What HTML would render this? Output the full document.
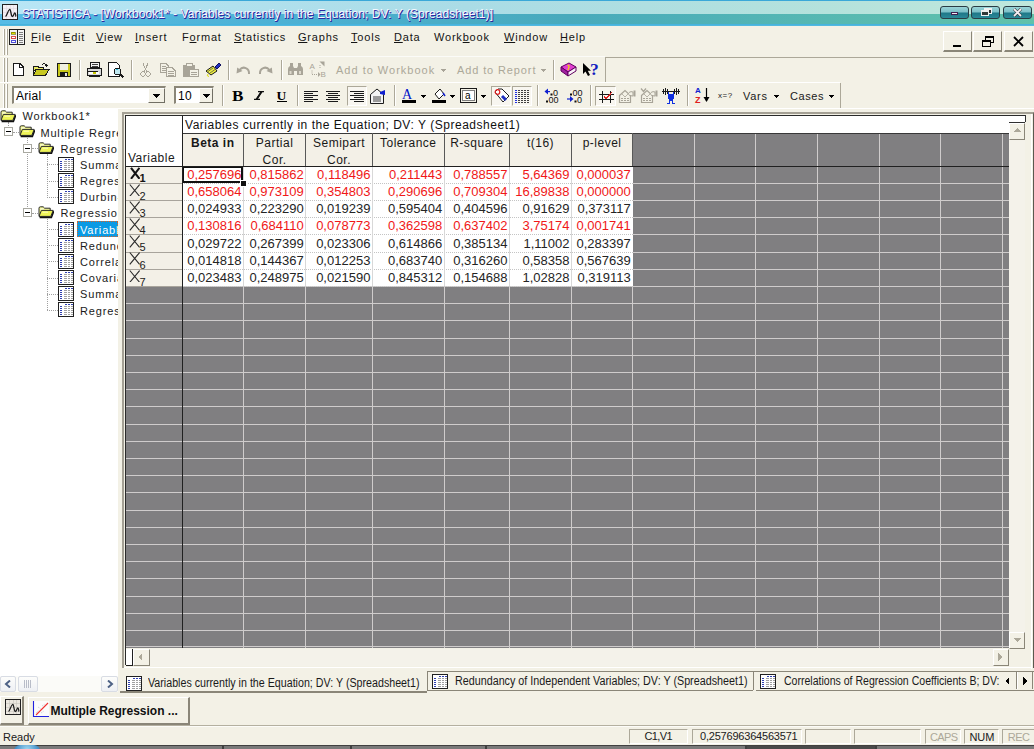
<!DOCTYPE html>
<html><head><meta charset="utf-8">
<style>
*{margin:0;padding:0;box-sizing:border-box}
html,body{width:1034px;height:749px;overflow:hidden;background:#F3F1E6;font-family:"Liberation Sans",sans-serif;font-size:11px;color:#000}
body{position:relative}
.a{position:absolute}
.t{white-space:nowrap;line-height:1}
</style></head><body>

<div class="a" style="left:0px;top:0px;width:1034px;height:26px;background:linear-gradient(to bottom,#3aa8d8 0,#3aa8d8 1px,rgba(0,0,0,0) 1px,rgba(0,0,0,0) 24px,#40b0dc 24px,#58bce0 26px),linear-gradient(to right,#b8e6f6 0,#aadce6 45%,#b4e2dc 80%,#c0e8dc 100%) 0 1px/100% 13px no-repeat,linear-gradient(to right,#56bce6 0,#4cb0d2 30%,#48aabc 55%,#56b8b2 80%,#60c2aa 100%) 0 14px/100% 10px no-repeat"></div>
<svg class="a" style="left:2px;top:4px;" width="16" height="16" viewBox="0 0 16 16"><rect x="0.5" y="0.5" width="15" height="15" fill="#f4f0f4" stroke="#202020"/><path d="M1 4.5h14M1 8.5h14M1 12.5h14M4.5 1v14M8.5 1v14M11.5 1v14" stroke="#e0d8e0" stroke-width="0.6"/><path d="M3.5 12.5C5 12 6 6 7.5 5.5C9 5 9 13 10.5 12.5C12 12 12 8.5 13 9C14 9.5 13.5 12 14 12.5" fill="none" stroke="#1a1a1a" stroke-width="1.3"/></svg>
<div class="a t" style="left:22px;top:7.6px;font-size:12px;letter-spacing:0.07px;color:#f8f8ff;text-shadow:1px 1px 0 #2a2aa0,0.5px 0.5px 0.5px #3030a0">STATISTICA - [Workbook1* - Variables currently in the Equation; DV: Y (Spreadsheet1)]</div>
<div class="a" style="left:940px;top:6px;width:29px;height:13px;border:1px solid #2a3c44;border-radius:3px;background:linear-gradient(#9ad4d8 0,#7cc0c8 45%,#1e7888 55%,#2a8898 100%)"></div>
<div class="a" style="left:951px;top:12px;width:7px;height:3px;background:#f0e8f0;border:1px solid #402050"></div>
<div class="a" style="left:971px;top:6px;width:29px;height:13px;border:1px solid #2a3c44;border-radius:3px;background:linear-gradient(#9ad4d8 0,#7cc0c8 45%,#1e7888 55%,#2a8898 100%)"></div>
<div class="a" style="left:984px;top:8px;width:8px;height:6px;border:1px solid #f0f0f0;border-top-width:2px;background:#303030"></div>
<div class="a" style="left:981px;top:10px;width:8px;height:6px;border:1px solid #f0f0f0;border-top-width:2px;background:#303838"></div>
<div class="a" style="left:1003px;top:6px;width:29px;height:13px;border:1px solid #2a3c44;border-radius:3px;background:linear-gradient(#9ad4d8 0,#7cc0c8 45%,#1e7888 55%,#2a8898 100%)"></div>
<svg class="a" style="left:1013px;top:8px;" width="9" height="9" viewBox="0 0 9 9"><path d="M1 1L8 8M8 1L1 8" stroke="#303030" stroke-width="3"/><path d="M1 1L8 8M8 1L1 8" stroke="#f4f0f4" stroke-width="1.8"/></svg>
<div class="a" style="left:3px;top:29px;width:1px;height:26px;background:#fff"></div>
<div class="a" style="left:4px;top:29px;width:1px;height:26px;background:#aca899"></div>
<div class="a" style="left:6px;top:29px;width:1px;height:26px;background:#fff"></div>
<div class="a" style="left:7px;top:29px;width:1px;height:26px;background:#aca899"></div>
<div class="a" style="left:3px;top:58px;width:1px;height:24px;background:#fff"></div>
<div class="a" style="left:4px;top:58px;width:1px;height:24px;background:#aca899"></div>
<div class="a" style="left:6px;top:58px;width:1px;height:24px;background:#fff"></div>
<div class="a" style="left:7px;top:58px;width:1px;height:24px;background:#aca899"></div>
<div class="a" style="left:3px;top:84px;width:1px;height:24px;background:#fff"></div>
<div class="a" style="left:4px;top:84px;width:1px;height:24px;background:#aca899"></div>
<div class="a" style="left:6px;top:84px;width:1px;height:24px;background:#fff"></div>
<div class="a" style="left:7px;top:84px;width:1px;height:24px;background:#aca899"></div>
<svg class="a" style="left:9px;top:29px;" width="16" height="16" viewBox="0 0 16 16" shape-rendering="crispEdges"><rect x="0.5" y="0.5" width="15" height="15" fill="#f4f4f4" stroke="#202020"/><line x1="8.5" y1="0" x2="8.5" y2="16" stroke="#202020"/><rect x="2" y="3" width="4" height="2" fill="#e0e000" stroke="#606000" stroke-width=".6"/><rect x="2" y="7" width="4" height="2" fill="#fff" stroke="#d02020" stroke-width=".8"/><rect x="2" y="11" width="4" height="2" fill="#fff" stroke="#2020d0" stroke-width=".8"/><path d="M10 3h4M10 5h4M10 7h4M10 9h4M10 11h4M10 13h4" stroke="#606060" stroke-width=".8"/></svg>
<div class="a t" style="left:31px;top:31.6px;font-size:11px;letter-spacing:0.8px;color:#141414"><u>F</u>ile</div>
<div class="a t" style="left:63px;top:31.6px;font-size:11px;letter-spacing:0.8px;color:#141414"><u>E</u>dit</div>
<div class="a t" style="left:96px;top:31.6px;font-size:11px;letter-spacing:0.8px;color:#141414"><u>V</u>iew</div>
<div class="a t" style="left:135px;top:31.6px;font-size:11px;letter-spacing:0.8px;color:#141414"><u>I</u>nsert</div>
<div class="a t" style="left:182px;top:31.6px;font-size:11px;letter-spacing:0.8px;color:#141414">F<u>o</u>rmat</div>
<div class="a t" style="left:234px;top:31.6px;font-size:11px;letter-spacing:0.8px;color:#141414"><u>S</u>tatistics</div>
<div class="a t" style="left:298px;top:31.6px;font-size:11px;letter-spacing:0.8px;color:#141414"><u>G</u>raphs</div>
<div class="a t" style="left:351px;top:31.6px;font-size:11px;letter-spacing:0.8px;color:#141414"><u>T</u>ools</div>
<div class="a t" style="left:394px;top:31.6px;font-size:11px;letter-spacing:0.8px;color:#141414"><u>D</u>ata</div>
<div class="a t" style="left:434px;top:31.6px;font-size:11px;letter-spacing:0.8px;color:#141414">Work<u>b</u>ook</div>
<div class="a t" style="left:504px;top:31.6px;font-size:11px;letter-spacing:0.8px;color:#141414"><u>W</u>indow</div>
<div class="a t" style="left:560px;top:31.6px;font-size:11px;letter-spacing:0.8px;color:#141414"><u>H</u>elp</div>
<div class="a" style="left:943px;top:31px;width:29px;height:21px;background:#F3F1E6;border-top:1px solid #fff;border-left:1px solid #fff;border-right:1px solid #8a8678;border-bottom:2px solid #8a8678"></div>
<div class="a" style="left:953px;top:45px;width:8px;height:2px;background:#000"></div>
<div class="a" style="left:973px;top:31px;width:29px;height:21px;background:#F3F1E6;border-top:1px solid #fff;border-left:1px solid #fff;border-right:1px solid #8a8678;border-bottom:2px solid #8a8678"></div>
<div class="a" style="left:985px;top:36px;width:9px;height:7px;border:1px solid #000;border-top-width:2px"></div>
<div class="a" style="left:982px;top:40px;width:9px;height:7px;border:1px solid #000;border-top-width:2px;background:#F3F1E6"></div>
<div class="a" style="left:1004px;top:31px;width:29px;height:21px;background:#F3F1E6;border-top:1px solid #fff;border-left:1px solid #fff;border-right:1px solid #8a8678;border-bottom:2px solid #8a8678"></div>
<svg class="a" style="left:1013px;top:36px;" width="11" height="11" viewBox="0 0 11 11"><path d="M1 1L10 10M10 1L1 10" stroke="#000" stroke-width="1.8"/></svg>
<div class="a" style="left:605px;top:57px;width:429px;height:1px;background:#aca899"></div>
<div class="a" style="left:0px;top:56px;width:605px;height:1px;background:#fbfbf8"></div>
<div class="a" style="left:605px;top:57px;width:1px;height:25px;background:#aca899"></div>
<div class="a" style="left:0px;top:82px;width:840px;height:1px;background:#fff"></div>
<div class="a" style="left:840px;top:83px;width:1px;height:25px;background:#aca899"></div>
<div class="a" style="left:0px;top:108px;width:1034px;height:1px;background:#fff"></div>
<svg class="a" style="left:12px;top:63px;" width="13" height="13" viewBox="0 0 13 13" shape-rendering="crispEdges"><path d="M1.5 0.5H8L11.5 4V12.5H1.5Z" fill="#fff" stroke="#1a1a1a"/><path d="M7.5 0.5V4.5H11.5" fill="none" stroke="#1a1a1a"/></svg>
<svg class="a" style="left:33px;top:62px;" width="17" height="15" viewBox="0 0 17 15" shape-rendering="crispEdges"><path d="M9 3Q11 0.5 13.5 3" fill="none" stroke="#1a1a1a"/><path d="M12 2L15 3.5L13 5Z" fill="#1a1a1a"/><path d="M0.5 4.5H5L6 5.5H10.5V8.5H0.5Z" fill="#e8e860" stroke="#1a1a1a"/><path d="M0.5 13.5L3 7.5H16L12.5 13.5Z" fill="#c8c820" stroke="#1a1a1a"/><path d="M0.5 5V13.5" stroke="#1a1a1a"/></svg>
<svg class="a" style="left:57px;top:63px;" width="14" height="14" viewBox="0 0 14 14" shape-rendering="crispEdges"><rect x="0.5" y="0.5" width="13" height="13" fill="#c8c81c" stroke="#1a1a1a"/><rect x="3" y="1" width="8" height="6" fill="#f0f0e0"/><rect x="3" y="9" width="8" height="4.5" fill="#1a1a1a"/><rect x="8" y="10" width="2" height="3" fill="#e8e8e8"/></svg>
<div class="a" style="left:79px;top:60px;width:1px;height:20px;background:#aca899"></div>
<div class="a" style="left:80px;top:60px;width:1px;height:20px;background:#fff"></div>
<svg class="a" style="left:86px;top:62px;" width="17" height="15" viewBox="0 0 17 15" shape-rendering="crispEdges"><path d="M4.5 0.5H13.5V5.5H4.5Z" fill="#f4f4f4" stroke="#1a1a1a"/><path d="M6 2h6M6 4h6" stroke="#404040"/><path d="M1.5 6.5H15.5V13.5H1.5Z" fill="#d8d8d8" stroke="#1a1a1a"/><path d="M2 9.5H12" stroke="#1a1a1a"/><rect x="3" y="10" width="10" height="2" fill="#fff"/><rect x="7" y="10" width="3" height="2" fill="#c8c800"/><path d="M3 14.5H14" stroke="#1a1a1a"/></svg>
<svg class="a" style="left:108px;top:62px;" width="17" height="16" viewBox="0 0 17 16" shape-rendering="crispEdges"><path d="M0.5 0.5H8.5L11.5 3.5V14.5H0.5Z" fill="#fff" stroke="#1a1a1a"/><circle cx="9.5" cy="9.5" r="3.3" fill="#bfe8f0" stroke="#1a1a1a"/><path d="M8.3 8.3l1 -1" stroke="#30c0e0" stroke-width="1.5"/><path d="M12 12L15.5 15.5" stroke="#1a1a1a" stroke-width="2"/></svg>
<div class="a" style="left:131px;top:60px;width:1px;height:20px;background:#aca899"></div>
<div class="a" style="left:132px;top:60px;width:1px;height:20px;background:#fff"></div>
<svg class="a" style="left:140px;top:63px;" width="11" height="14" viewBox="0 0 11 14" shape-rendering="crispEdges"><path d="M3 0.5L7 9M8 0.5L4 9" stroke="#a8a498" fill="none"/><circle cx="3" cy="11" r="2.2" fill="none" stroke="#a8a498"/><circle cx="8" cy="11" r="2.2" fill="none" stroke="#a8a498"/></svg>
<svg class="a" style="left:160px;top:63px;" width="16" height="14" viewBox="0 0 16 14" shape-rendering="crispEdges"><path d="M0.5 0.5H6L8.5 3V9.5H0.5Z" fill="#F3F1E6" stroke="#a8a498"/><path d="M2 3h4M2 5h4M2 7h4" stroke="#a8a498"/><path d="M6.5 4.5H12L15.5 8V13.5H6.5Z" fill="#F3F1E6" stroke="#a8a498"/><path d="M8 8h6M8 10h6M8 12h6" stroke="#a8a498"/></svg>
<svg class="a" style="left:183px;top:63px;" width="16" height="14" viewBox="0 0 16 14" shape-rendering="crispEdges"><path d="M0.5 2.5H11.5V13.5H0.5Z" fill="#a8a498" stroke="#a8a498"/><rect x="3" y="0.5" width="6" height="3" fill="#F3F1E6" stroke="#a8a498"/><path d="M6.5 6.5H15.5V13.5H6.5Z" fill="#F3F1E6" stroke="#a8a498"/><path d="M8 9h6M8 11h6" stroke="#a8a498"/></svg>
<svg class="a" style="left:205px;top:62px;" width="17" height="15" viewBox="0 0 17 15"><path d="M1 9L8 4L12 9L6 13Z" fill="#f0f040" stroke="#1a1a1a"/><path d="M3 9.5L8 6M5 11L10 7.5" stroke="#404040" stroke-width=".7"/><path d="M10 5L14 1L16 3L12 7Z" fill="#2030c0" stroke="#101060"/><path d="M3 12Q1 14 4 14.5" stroke="#e0e000" fill="none"/></svg>
<div class="a" style="left:228px;top:60px;width:1px;height:20px;background:#aca899"></div>
<div class="a" style="left:229px;top:60px;width:1px;height:20px;background:#fff"></div>
<svg class="a" style="left:236px;top:64px;" width="15" height="11" viewBox="0 0 15 11"><path d="M13 10C13.5 4 7 1.5 3.5 6" fill="none" stroke="#a8a498" stroke-width="2"/><path d="M0.5 9.5L1.2 3.5L6.5 7Z" fill="#a8a498"/></svg>
<svg class="a" style="left:258px;top:64px;" width="15" height="11" viewBox="0 0 15 11"><path d="M2 10C1.5 4 8 1.5 11.5 6" fill="none" stroke="#a8a498" stroke-width="2"/><path d="M14.5 9.5L13.8 3.5L8.5 7Z" fill="#a8a498"/></svg>
<div class="a" style="left:281px;top:60px;width:1px;height:20px;background:#aca899"></div>
<div class="a" style="left:282px;top:60px;width:1px;height:20px;background:#fff"></div>
<svg class="a" style="left:287px;top:62px;" width="17" height="14" viewBox="0 0 17 14"><path d="M1 13V7Q1 5 3 4V1H6V4L7 6H10L11 4V1H14V4Q16 5 16 7V13H10V9H7V13Z" fill="#a8a498"/><rect x="2.5" y="9" width="2" height="3" fill="#dcd8cc"/><rect x="12" y="9" width="2" height="3" fill="#dcd8cc"/></svg>
<svg class="a" style="left:309px;top:61px;" width="18" height="17" viewBox="0 0 18 17"><text x="0.5" y="7.5" font-size="8" fill="#a8a498" font-family="Liberation Sans">A</text><text x="11.5" y="16" font-size="8" fill="#a8a498" font-family="Liberation Sans">B</text><path d="M3 9.5V13.5H9" fill="none" stroke="#a8a498" stroke-dasharray="1 1"/><path d="M9 11L11.5 13.5L9 16Z" fill="#a8a498"/><path d="M11 7L11 3" stroke="#a8a498" stroke-dasharray="1 1"/><path d="M10.5 0.5H15.5V5.5Z" fill="#a8a498"/></svg>
<div class="a t" style="left:336px;top:65px;color:#aca899;font-size:11px;letter-spacing:1.0px">Add to Workbook</div>
<svg class="a" style="left:441px;top:69px;" width="5" height="3" viewBox="0 0 5 3" shape-rendering="crispEdges"><path d="M0 0H5L2.5 3Z" fill="#a8a498"/></svg>
<div class="a t" style="left:457px;top:65px;color:#aca899;font-size:11px;letter-spacing:0.88px">Add to Report</div>
<svg class="a" style="left:541px;top:69px;" width="5" height="3" viewBox="0 0 5 3" shape-rendering="crispEdges"><path d="M0 0H5L2.5 3Z" fill="#a8a498"/></svg>
<div class="a" style="left:553px;top:60px;width:1px;height:20px;background:#aca899"></div>
<div class="a" style="left:554px;top:60px;width:1px;height:20px;background:#fff"></div>
<svg class="a" style="left:560px;top:62px;" width="17" height="15" viewBox="0 0 17 15"><path d="M1 5L9 1L16 5L8 10Z" fill="#e040d0" stroke="#600060"/><path d="M1 5V9L8 14V10Z" fill="#a020a0" stroke="#600060"/><path d="M8 10V14L16 9V5Z" fill="#f8f0f8" stroke="#600060"/><path d="M7.5 3.5Q9.5 3 9 5T8 6.5" stroke="#f0e000" fill="none" stroke-width="1.2"/><rect x="7.5" y="7" width="1.2" height="1" fill="#f0e000"/></svg>
<svg class="a" style="left:582px;top:62px;" width="18" height="15" viewBox="0 0 18 15"><path d="M1 1V12L3.5 9.5L6 14L8 13L5.8 8.7H9Z" fill="#000"/><text x="8" y="13" font-size="17.5" font-weight="bold" fill="#1020c0" font-family="Liberation Serif">?</text></svg>
<div class="a" style="left:12px;top:86px;width:154px;height:18px;background:#fff;border-top:2px solid #8a8678;border-left:2px solid #8a8678;border-bottom:1px solid #F3F1E6;border-right:1px solid #F3F1E6"></div>
<div class="a t" style="left:16px;top:90px;font-size:12px;letter-spacing:0.3px">Arial</div>
<div class="a" style="left:148px;top:88px;width:17px;height:15px;background:#F3F1E6;border-top:1px solid #fff;border-left:1px solid #fff;border-right:1px solid #716f64;border-bottom:1px solid #716f64"></div>
<svg class="a" style="left:153px;top:94px;" width="7" height="4" viewBox="0 0 7 4" shape-rendering="crispEdges"><path d="M0 0H7L3.5 4Z" fill="#000"/></svg>
<div class="a" style="left:174px;top:86px;width:40px;height:18px;background:#fff;border-top:2px solid #8a8678;border-left:2px solid #8a8678;border-bottom:1px solid #F3F1E6;border-right:1px solid #F3F1E6"></div>
<div class="a t" style="left:178px;top:90px;font-size:12px;letter-spacing:0.3px">10</div>
<div class="a" style="left:199px;top:88px;width:14px;height:15px;background:#F3F1E6;border-top:1px solid #fff;border-left:1px solid #fff;border-right:1px solid #716f64;border-bottom:1px solid #716f64"></div>
<svg class="a" style="left:203px;top:94px;" width="7" height="4" viewBox="0 0 7 4" shape-rendering="crispEdges"><path d="M0 0H7L3.5 4Z" fill="#000"/></svg>
<div class="a" style="left:222px;top:85px;width:1px;height:21px;background:#aca899"></div>
<div class="a" style="left:223px;top:85px;width:1px;height:21px;background:#fff"></div>
<div class="a t" style="left:232px;top:88.5px;font-family:Liberation Serif;font-weight:bold;font-size:14.5px;transform:scaleX(1.18);transform-origin:0 0">B</div>
<svg class="a" style="left:254px;top:91px;" width="10" height="9" viewBox="0 0 10 9"><path d="M4 0.6H10M0 8.4H6M7.5 0.6L2.5 8.4" stroke="#101010" stroke-width="1.4" fill="none"/><path d="M6.6 0.6L8.8 0.6L3.6 8.4L1.4 8.4Z" fill="#101010"/></svg>
<div class="a t" style="left:276.5px;top:88.5px;font-family:Liberation Serif;font-weight:bold;font-size:13.5px">U</div>
<div class="a" style="left:277px;top:101px;width:10px;height:1px;background:#000"></div>
<div class="a" style="left:297px;top:85px;width:1px;height:21px;background:#aca899"></div>
<div class="a" style="left:298px;top:85px;width:1px;height:21px;background:#fff"></div>
<svg class="a" style="left:304px;top:91px;" width="14" height="11" viewBox="0 0 14 11" shape-rendering="crispEdges"><rect x="0" y="0" width="14" height="1" fill="#1a1a1a"/><rect x="0" y="2" width="9" height="1" fill="#1a1a1a"/><rect x="0" y="4" width="14" height="1" fill="#1a1a1a"/><rect x="0" y="6" width="9" height="1" fill="#1a1a1a"/><rect x="0" y="8" width="14" height="1" fill="#1a1a1a"/><rect x="0" y="10" width="9" height="1" fill="#1a1a1a"/></svg>
<svg class="a" style="left:326px;top:91px;" width="14" height="11" viewBox="0 0 14 11" shape-rendering="crispEdges"><rect x="0" y="0" width="14" height="1" fill="#1a1a1a"/><rect x="2" y="2" width="10" height="1" fill="#1a1a1a"/><rect x="0" y="4" width="14" height="1" fill="#1a1a1a"/><rect x="2" y="6" width="10" height="1" fill="#1a1a1a"/><rect x="0" y="8" width="14" height="1" fill="#1a1a1a"/><rect x="2" y="10" width="10" height="1" fill="#1a1a1a"/></svg>
<div class="a" style="left:347px;top:86px;width:20px;height:20px;background:#f8f6f0;border-top:1px solid #aca899;border-left:1px solid #aca899;border-right:1px solid #fff;border-bottom:1px solid #fff"></div>
<svg class="a" style="left:350px;top:91px;" width="14" height="11" viewBox="0 0 14 11" shape-rendering="crispEdges"><rect x="0" y="0" width="14" height="1" fill="#1a1a1a"/><rect x="4" y="2" width="10" height="1" fill="#1a1a1a"/><rect x="0" y="4" width="14" height="1" fill="#1a1a1a"/><rect x="4" y="6" width="10" height="1" fill="#1a1a1a"/><rect x="0" y="8" width="14" height="1" fill="#1a1a1a"/><rect x="4" y="10" width="10" height="1" fill="#1a1a1a"/></svg>
<svg class="a" style="left:370px;top:88px;" width="18" height="16" viewBox="0 0 18 16"><path d="M0.5 6.5L7 1L13.5 6.5V15.5H0.5Z" fill="#f4f4f4" stroke="#1a1a1a"/><path d="M3 9h8M3 11h8M3 13h8" stroke="#404040"/><path d="M10 4L15 2V7L10 6Z" fill="#1020d0"/></svg>
<div class="a" style="left:394px;top:85px;width:1px;height:21px;background:#aca899"></div>
<div class="a" style="left:395px;top:85px;width:1px;height:21px;background:#fff"></div>
<div class="a t" style="left:402px;top:88px;font-family:Liberation Serif;font-size:14px;color:#0010c8">A</div>
<div class="a" style="left:402px;top:100px;width:14px;height:3px;background:#000"></div>
<svg class="a" style="left:421px;top:95px;" width="5" height="3" viewBox="0 0 5 3" shape-rendering="crispEdges"><path d="M0 0H5L2.5 3Z" fill="#000"/></svg>
<svg class="a" style="left:432px;top:88px;" width="15" height="12" viewBox="0 0 15 12"><path d="M3 6L8 1L12 6L7 11Z" fill="#fff" stroke="#1a1a1a"/><path d="M11 5L13 8" stroke="#1020d0" stroke-width="1.5"/></svg>
<div class="a" style="left:432px;top:100px;width:14px;height:3px;background:#000"></div>
<svg class="a" style="left:450px;top:95px;" width="5" height="3" viewBox="0 0 5 3" shape-rendering="crispEdges"><path d="M0 0H5L2.5 3Z" fill="#000"/></svg>
<svg class="a" style="left:460px;top:88px;" width="17" height="15" viewBox="0 0 17 15" shape-rendering="crispEdges"><rect x="0.5" y="0.5" width="16" height="14" fill="none" stroke="#1a1a1a"/><rect x="2.5" y="2.5" width="12" height="10" fill="#fff" stroke="#808080"/></svg>
<div class="a t" style="left:465px;top:91px;font-size:10px">a</div>
<svg class="a" style="left:481px;top:95px;" width="5" height="3" viewBox="0 0 5 3" shape-rendering="crispEdges"><path d="M0 0H5L2.5 3Z" fill="#000"/></svg>
<div class="a" style="left:491px;top:86px;width:20px;height:20px;background:#f8f6f0;border-top:1px solid #aca899;border-left:1px solid #aca899;border-right:1px solid #fff;border-bottom:1px solid #fff"></div>
<div class="a" style="left:512px;top:86px;width:20px;height:20px;background:#f8f6f0;border-top:1px solid #aca899;border-left:1px solid #aca899;border-right:1px solid #fff;border-bottom:1px solid #fff"></div>
<svg class="a" style="left:493px;top:88px;" width="17" height="17" viewBox="0 0 17 17"><path d="M2 4L5 1H9L16 8L10 14Z" fill="#fff" stroke="#1a1a1a"/><path d="M9 8L13 12" stroke="#2030c0" stroke-width="3"/><circle cx="4.5" cy="4" r="2.3" fill="none" stroke="#e02020" stroke-width="1.2"/></svg>
<svg class="a" style="left:515px;top:90px;" width="15" height="14" viewBox="0 0 15 14" shape-rendering="crispEdges"><rect x="0" y="0" width="2" height="1" fill="#2030e0"/><rect x="0" y="2" width="2" height="1" fill="#2030e0"/><rect x="0" y="4" width="2" height="1" fill="#2030e0"/><rect x="0" y="6" width="2" height="1" fill="#2030e0"/><rect x="0" y="8" width="2" height="1" fill="#2030e0"/><rect x="0" y="10" width="2" height="1" fill="#2030e0"/><rect x="0" y="12" width="2" height="1" fill="#2030e0"/><rect x="3" y="0" width="2" height="1" fill="#404040"/><rect x="3" y="2" width="2" height="1" fill="#404040"/><rect x="3" y="4" width="2" height="1" fill="#404040"/><rect x="3" y="6" width="2" height="1" fill="#404040"/><rect x="3" y="8" width="2" height="1" fill="#404040"/><rect x="3" y="10" width="2" height="1" fill="#404040"/><rect x="3" y="12" width="2" height="1" fill="#404040"/><rect x="6" y="0" width="2" height="1" fill="#404040"/><rect x="6" y="2" width="2" height="1" fill="#404040"/><rect x="6" y="4" width="2" height="1" fill="#404040"/><rect x="6" y="6" width="2" height="1" fill="#404040"/><rect x="6" y="8" width="2" height="1" fill="#404040"/><rect x="6" y="10" width="2" height="1" fill="#404040"/><rect x="6" y="12" width="2" height="1" fill="#404040"/><rect x="9" y="0" width="2" height="1" fill="#404040"/><rect x="9" y="2" width="2" height="1" fill="#404040"/><rect x="9" y="4" width="2" height="1" fill="#404040"/><rect x="9" y="6" width="2" height="1" fill="#404040"/><rect x="9" y="8" width="2" height="1" fill="#404040"/><rect x="9" y="10" width="2" height="1" fill="#404040"/><rect x="9" y="12" width="2" height="1" fill="#404040"/><rect x="12" y="0" width="2" height="1" fill="#404040"/><rect x="12" y="2" width="2" height="1" fill="#404040"/><rect x="12" y="4" width="2" height="1" fill="#404040"/><rect x="12" y="6" width="2" height="1" fill="#404040"/><rect x="12" y="8" width="2" height="1" fill="#404040"/><rect x="12" y="10" width="2" height="1" fill="#404040"/><rect x="12" y="12" width="2" height="1" fill="#404040"/></svg>
<div class="a" style="left:537px;top:85px;width:1px;height:21px;background:#aca899"></div>
<div class="a" style="left:538px;top:85px;width:1px;height:21px;background:#fff"></div>
<svg class="a" style="left:544px;top:88px;" width="17" height="15" viewBox="0 0 17 15"><path d="M0.5 3.5L4 0.5V6.5Z" fill="#1020d0"/><rect x="3" y="3" width="3" height="1.2" fill="#1020d0"/><rect x="6.5" y="5.5" width="2" height="2" fill="#101010"/><text x="9" y="7.5" font-size="9" font-family="Liberation Sans" fill="#101010">0</text><rect x="2" y="12.5" width="2" height="2" fill="#101010"/><text x="4.5" y="14.5" font-size="9" font-family="Liberation Sans" fill="#101010">00</text></svg>
<svg class="a" style="left:566px;top:88px;" width="17" height="15" viewBox="0 0 17 15"><rect x="4" y="5.5" width="2" height="2" fill="#101010"/><text x="6.5" y="7.5" font-size="9" font-family="Liberation Sans" fill="#101010">00</text><path d="M7.5 11L4 8V14Z" fill="#1020d0"/><rect x="1" y="10.4" width="3" height="1.2" fill="#1020d0"/><rect x="8.5" y="12.5" width="2" height="2" fill="#101010"/><text x="11" y="14.5" font-size="9" font-family="Liberation Sans" fill="#101010">0</text></svg>
<div class="a" style="left:590px;top:85px;width:1px;height:21px;background:#aca899"></div>
<div class="a" style="left:591px;top:85px;width:1px;height:21px;background:#fff"></div>
<div class="a" style="left:595px;top:86px;width:21px;height:20px;background:#f8f6f0;border-top:1px solid #aca899;border-left:1px solid #aca899;border-right:1px solid #fff;border-bottom:1px solid #fff"></div>
<svg class="a" style="left:599px;top:91px;" width="15" height="12" viewBox="0 0 15 12" shape-rendering="crispEdges"><path d="M0 3.5H15M0 8.5H15M3.5 0V12M11.5 0V12" stroke="#1a1a1a" stroke-width="1"/><path d="M5 5.5L7 8L12.5 1.5" stroke="#e02020" fill="none" stroke-width="1.3"/></svg>
<svg class="a" style="left:618px;top:88px;" width="18" height="16" viewBox="0 0 18 16"><path d="M1.5 7.5L7 2.5L12.5 7.5V14.5H1.5Z" fill="#F3F1E6" stroke="#a8a498" stroke-width="1.2"/><path d="M4 6L7 9L10 6" stroke="#a8a498" stroke-width="0.8" fill="none"/><path d="M3 10.5h2M6 10.5h2M9 10.5h2M3 12.5h2M6 12.5h2M9 12.5h2" stroke="#a8a498"/><path d="M11 4.5Q13 3 15 4V8Q13 8 11 7" fill="#F3F1E6" stroke="#a8a498"/><rect x="15.5" y="2.5" width="2" height="6" fill="#a8a498"/></svg>
<svg class="a" style="left:640px;top:88px;" width="18" height="16" viewBox="0 0 18 16"><path d="M1.5 7.5L7 2.5L12.5 7.5V14.5H1.5Z" fill="#F3F1E6" stroke="#a8a498" stroke-width="1.2"/><path d="M4 6L7 9L10 6" stroke="#a8a498" stroke-width="0.8" fill="none"/><path d="M3 10.5h2M6 10.5h2M9 10.5h2M3 12.5h2M6 12.5h2M9 12.5h2" stroke="#a8a498"/><path d="M11 4.5Q13 3 15 4V8Q13 8 11 7" fill="#F3F1E6" stroke="#a8a498"/><rect x="15.5" y="2.5" width="2" height="6" fill="#a8a498"/><path d="M1 0.5L4 4M6 0.5L3 4" stroke="#a8a498" stroke-width="1.2"/></svg>
<svg class="a" style="left:662px;top:87px;" width="18" height="18" viewBox="0 0 18 18" shape-rendering="crispEdges"><rect x="0" y="4" width="18" height="1" fill="#1a1a1a"/><rect x="1" y="2" width="1" height="5" fill="#1a1a1a"/><rect x="3" y="1" width="1" height="7" fill="#1a1a1a"/><rect x="5" y="2" width="1" height="5" fill="#1a1a1a"/><rect x="12" y="2" width="1" height="5" fill="#1a1a1a"/><rect x="14" y="1" width="1" height="7" fill="#1a1a1a"/><rect x="16" y="2" width="1" height="5" fill="#1a1a1a"/><rect x="6" y="5" width="1" height="4" fill="#1030e0"/><rect x="11" y="5" width="1" height="4" fill="#1030e0"/><rect x="7" y="7" width="4" height="7" fill="#1030e0"/><rect x="6" y="9" width="6" height="3" fill="#1030e0"/><rect x="7" y="14" width="1" height="3" fill="#1030e0"/><rect x="10" y="14" width="1" height="3" fill="#1030e0"/><rect x="5" y="16" width="2" height="1" fill="#1030e0"/><rect x="11" y="16" width="2" height="1" fill="#1030e0"/></svg>
<div class="a" style="left:687px;top:85px;width:1px;height:21px;background:#aca899"></div>
<div class="a" style="left:688px;top:85px;width:1px;height:21px;background:#fff"></div>
<div class="a t" style="left:695px;top:87px;font-size:8px;font-weight:bold;color:#1020d0">A</div>
<div class="a t" style="left:695px;top:96px;font-size:9px;font-weight:bold;color:#e02020">Z</div>
<svg class="a" style="left:703px;top:88px;" width="7" height="15" viewBox="0 0 7 15"><path d="M3.5 0V13" stroke="#000" stroke-width="1.2"/><path d="M0.5 9L3.5 14L6.5 9Z" fill="#000"/></svg>
<div class="a t" style="left:718px;top:92px;font-size:8px;letter-spacing:0.5px;color:#202020">x=?</div>
<div class="a t" style="left:743px;top:91px;font-size:11px;letter-spacing:0.7px;color:#202020">Vars</div>
<svg class="a" style="left:774px;top:95px;" width="5" height="3" viewBox="0 0 5 3" shape-rendering="crispEdges"><path d="M0 0H5L2.5 3Z" fill="#000"/></svg>
<div class="a t" style="left:790px;top:91px;font-size:11px;letter-spacing:0.55px;color:#202020">Cases</div>
<svg class="a" style="left:829px;top:95px;" width="5" height="3" viewBox="0 0 5 3" shape-rendering="crispEdges"><path d="M0 0H5L2.5 3Z" fill="#000"/></svg>
<div class="a" style="left:122px;top:112px;width:912px;height:556px;border-left:2px solid #a4a094;border-top:2px solid #a4a094;border-right:1px solid #5a5850;border-bottom:0"></div>
<div class="a" style="left:1031px;top:114px;width:1px;height:555px;background:#fff"></div>
<div class="a" style="left:124px;top:667px;width:907px;height:1px;background:#fff"></div>
<div class="a" style="left:125px;top:115px;width:1px;height:550px;background:#2a2a2a"></div>
<div class="a" style="left:125px;top:115px;width:900px;height:1px;background:#2a2a2a"></div>
<div class="a" style="left:126px;top:116px;width:883px;height:532px;background:#807F81"></div>
<div class="a" style="left:126px;top:182.7px;width:883px;height:1px;background:#cfcccc"></div>
<div class="a" style="left:126px;top:199.9px;width:883px;height:1px;background:#cfcccc"></div>
<div class="a" style="left:126px;top:217.1px;width:883px;height:1px;background:#cfcccc"></div>
<div class="a" style="left:126px;top:234.3px;width:883px;height:1px;background:#cfcccc"></div>
<div class="a" style="left:126px;top:251.5px;width:883px;height:1px;background:#cfcccc"></div>
<div class="a" style="left:126px;top:268.7px;width:883px;height:1px;background:#cfcccc"></div>
<div class="a" style="left:126px;top:285.9px;width:883px;height:1px;background:#cfcccc"></div>
<div class="a" style="left:126px;top:303.1px;width:883px;height:1px;background:#cfcccc"></div>
<div class="a" style="left:126px;top:320.3px;width:883px;height:1px;background:#cfcccc"></div>
<div class="a" style="left:126px;top:337.5px;width:883px;height:1px;background:#cfcccc"></div>
<div class="a" style="left:126px;top:354.7px;width:883px;height:1px;background:#cfcccc"></div>
<div class="a" style="left:126px;top:371.9px;width:883px;height:1px;background:#cfcccc"></div>
<div class="a" style="left:126px;top:389.1px;width:883px;height:1px;background:#cfcccc"></div>
<div class="a" style="left:126px;top:406.3px;width:883px;height:1px;background:#cfcccc"></div>
<div class="a" style="left:126px;top:423.5px;width:883px;height:1px;background:#cfcccc"></div>
<div class="a" style="left:126px;top:440.7px;width:883px;height:1px;background:#cfcccc"></div>
<div class="a" style="left:126px;top:457.9px;width:883px;height:1px;background:#cfcccc"></div>
<div class="a" style="left:126px;top:475.1px;width:883px;height:1px;background:#cfcccc"></div>
<div class="a" style="left:126px;top:492.3px;width:883px;height:1px;background:#cfcccc"></div>
<div class="a" style="left:126px;top:509.5px;width:883px;height:1px;background:#cfcccc"></div>
<div class="a" style="left:126px;top:526.7px;width:883px;height:1px;background:#cfcccc"></div>
<div class="a" style="left:126px;top:543.9px;width:883px;height:1px;background:#cfcccc"></div>
<div class="a" style="left:126px;top:561.1px;width:883px;height:1px;background:#cfcccc"></div>
<div class="a" style="left:126px;top:578.3px;width:883px;height:1px;background:#cfcccc"></div>
<div class="a" style="left:126px;top:595.5px;width:883px;height:1px;background:#cfcccc"></div>
<div class="a" style="left:126px;top:612.7px;width:883px;height:1px;background:#cfcccc"></div>
<div class="a" style="left:126px;top:629.9px;width:883px;height:1px;background:#cfcccc"></div>
<div class="a" style="left:126px;top:646.0px;width:883px;height:1px;background:#cfcccc"></div>
<div class="a" style="left:243.0px;top:133px;width:1px;height:515px;background:#cfcccc"></div>
<div class="a" style="left:305.2px;top:133px;width:1px;height:515px;background:#cfcccc"></div>
<div class="a" style="left:371.9px;top:133px;width:1px;height:515px;background:#cfcccc"></div>
<div class="a" style="left:443.7px;top:133px;width:1px;height:515px;background:#cfcccc"></div>
<div class="a" style="left:509.0px;top:133px;width:1px;height:515px;background:#cfcccc"></div>
<div class="a" style="left:571.0px;top:133px;width:1px;height:515px;background:#cfcccc"></div>
<div class="a" style="left:632.2px;top:133px;width:1px;height:515px;background:#cfcccc"></div>
<div class="a" style="left:693.5px;top:133px;width:1px;height:515px;background:#cfcccc"></div>
<div class="a" style="left:755.0px;top:133px;width:1px;height:515px;background:#cfcccc"></div>
<div class="a" style="left:816.5px;top:133px;width:1px;height:515px;background:#cfcccc"></div>
<div class="a" style="left:878.5px;top:133px;width:1px;height:515px;background:#cfcccc"></div>
<div class="a" style="left:940.0px;top:133px;width:1px;height:515px;background:#cfcccc"></div>
<div class="a" style="left:1001.5px;top:133px;width:1px;height:515px;background:#cfcccc"></div>
<div class="a" style="left:126px;top:116px;width:56px;height:50px;background:#fff"></div>
<div class="a" style="left:182px;top:116px;width:827px;height:17px;background:#fff"></div>
<div class="a t" style="left:128px;top:152px;font-size:12px;letter-spacing:0.5px;color:#202020">Variable</div>
<div class="a t" style="left:185px;top:119px;font-size:12px;letter-spacing:0.53px;color:#101010">Variables currently in the Equation; DV: Y (Spreadsheet1)</div>
<div class="a" style="left:182px;top:133.5px;width:451px;height:33px;background:#F3F0E7"></div>
<div class="a t" style="left:182px;top:137px;width:61.5px;text-align:center;font-size:12px;letter-spacing:0.5px;color:#181818"><b>Beta in</b></div>
<div class="a t" style="left:243.5px;top:137px;width:62.2px;text-align:center;font-size:12px;letter-spacing:0.5px;color:#181818">Partial</div>
<div class="a t" style="left:243.5px;top:154px;width:62.2px;text-align:center;font-size:12px;letter-spacing:0.5px;color:#181818">Cor.</div>
<div class="a t" style="left:305.7px;top:137px;width:66.7px;text-align:center;font-size:12px;letter-spacing:0.5px;color:#181818">Semipart</div>
<div class="a t" style="left:305.7px;top:154px;width:66.7px;text-align:center;font-size:12px;letter-spacing:0.5px;color:#181818">Cor.</div>
<div class="a t" style="left:372.4px;top:137px;width:71.8px;text-align:center;font-size:12px;letter-spacing:0.5px;color:#181818">Tolerance</div>
<div class="a t" style="left:444.2px;top:137px;width:65.3px;text-align:center;font-size:12px;letter-spacing:0.5px;color:#181818">R-square</div>
<div class="a t" style="left:509.5px;top:137px;width:62.0px;text-align:center;font-size:12px;letter-spacing:0.5px;color:#181818">t(16)</div>
<div class="a t" style="left:571.5px;top:137px;width:61.2px;text-align:center;font-size:12px;letter-spacing:0.5px;color:#181818">p-level</div>
<div class="a" style="left:182px;top:166px;width:451px;height:120.4px;background:#fff"></div>
<div class="a" style="left:126px;top:166px;width:56px;height:120.4px;background:#F3F0E7"></div>
<div class="a" style="left:126px;top:182.7px;width:56px;height:1px;background:#a8a49c"></div>
<div class="a" style="left:182px;top:182.7px;width:451px;height:1px;border-top:1px dotted #c4c4c4"></div>
<div class="a t" style="left:182px;top:167.7px;width:59.5px;text-align:right;font-size:13px;letter-spacing:0px;color:#f01818">0,257696</div>
<div class="a t" style="left:243.5px;top:167.7px;width:60.2px;text-align:right;font-size:13px;letter-spacing:0px;color:#f01818">0,815862</div>
<div class="a t" style="left:305.7px;top:167.7px;width:64.7px;text-align:right;font-size:13px;letter-spacing:0px;color:#f01818">0,118496</div>
<div class="a t" style="left:372.4px;top:167.7px;width:69.8px;text-align:right;font-size:13px;letter-spacing:0px;color:#f01818">0,211443</div>
<div class="a t" style="left:444.2px;top:167.7px;width:63.3px;text-align:right;font-size:13px;letter-spacing:0px;color:#f01818">0,788557</div>
<div class="a t" style="left:509.5px;top:167.7px;width:60.0px;text-align:right;font-size:13px;letter-spacing:0px;color:#f01818">5,64369</div>
<div class="a t" style="left:571.5px;top:167.7px;width:59.2px;text-align:right;font-size:13px;letter-spacing:0px;color:#f01818">0,000037</div>
<svg class="a" style="left:129.5px;top:166.6px;" width="10.5" height="12.6" viewBox="0 0 10.5 12.6"><path d="M1 0.8L9.5 11.8M9.5 0.8L1 11.8" stroke="#141414" stroke-width="2.1"/></svg>
<div class="a t" style="left:139.6px;top:173.2px;font-size:11px;font-weight:bold;color:#141414">1</div>
<div class="a" style="left:126px;top:199.9px;width:56px;height:1px;background:#a8a49c"></div>
<div class="a" style="left:182px;top:199.9px;width:451px;height:1px;border-top:1px dotted #c4c4c4"></div>
<div class="a t" style="left:182px;top:184.9px;width:59.5px;text-align:right;font-size:13px;letter-spacing:0px;color:#f01818">0,658064</div>
<div class="a t" style="left:243.5px;top:184.9px;width:60.2px;text-align:right;font-size:13px;letter-spacing:0px;color:#f01818">0,973109</div>
<div class="a t" style="left:305.7px;top:184.9px;width:64.7px;text-align:right;font-size:13px;letter-spacing:0px;color:#f01818">0,354803</div>
<div class="a t" style="left:372.4px;top:184.9px;width:69.8px;text-align:right;font-size:13px;letter-spacing:0px;color:#f01818">0,290696</div>
<div class="a t" style="left:444.2px;top:184.9px;width:63.3px;text-align:right;font-size:13px;letter-spacing:0px;color:#f01818">0,709304</div>
<div class="a t" style="left:509.5px;top:184.9px;width:60.0px;text-align:right;font-size:13px;letter-spacing:0px;color:#f01818">16,89838</div>
<div class="a t" style="left:571.5px;top:184.9px;width:59.2px;text-align:right;font-size:13px;letter-spacing:0px;color:#f01818">0,000000</div>
<svg class="a" style="left:128.5px;top:183.6px;" width="11.4" height="12.8" viewBox="0 0 11.4 12.8"><path d="M0.8 0.5L10.6 12.3M10.6 0.5L0.8 12.3" stroke="#2c2c2c" stroke-width="1.15"/></svg>
<div class="a t" style="left:139.6px;top:190.8px;font-size:11px;color:#202020">2</div>
<div class="a" style="left:126px;top:217.1px;width:56px;height:1px;background:#a8a49c"></div>
<div class="a" style="left:182px;top:217.1px;width:451px;height:1px;border-top:1px dotted #c4c4c4"></div>
<div class="a t" style="left:182px;top:202.1px;width:59.5px;text-align:right;font-size:13px;letter-spacing:0px;color:#242424">0,024933</div>
<div class="a t" style="left:243.5px;top:202.1px;width:60.2px;text-align:right;font-size:13px;letter-spacing:0px;color:#242424">0,223290</div>
<div class="a t" style="left:305.7px;top:202.1px;width:64.7px;text-align:right;font-size:13px;letter-spacing:0px;color:#242424">0,019239</div>
<div class="a t" style="left:372.4px;top:202.1px;width:69.8px;text-align:right;font-size:13px;letter-spacing:0px;color:#242424">0,595404</div>
<div class="a t" style="left:444.2px;top:202.1px;width:63.3px;text-align:right;font-size:13px;letter-spacing:0px;color:#242424">0,404596</div>
<div class="a t" style="left:509.5px;top:202.1px;width:60.0px;text-align:right;font-size:13px;letter-spacing:0px;color:#242424">0,91629</div>
<div class="a t" style="left:571.5px;top:202.1px;width:59.2px;text-align:right;font-size:13px;letter-spacing:0px;color:#242424">0,373117</div>
<svg class="a" style="left:128.5px;top:200.8px;" width="11.4" height="12.8" viewBox="0 0 11.4 12.8"><path d="M0.8 0.5L10.6 12.3M10.6 0.5L0.8 12.3" stroke="#2c2c2c" stroke-width="1.15"/></svg>
<div class="a t" style="left:139.6px;top:208.0px;font-size:11px;color:#202020">3</div>
<div class="a" style="left:126px;top:234.3px;width:56px;height:1px;background:#a8a49c"></div>
<div class="a" style="left:182px;top:234.3px;width:451px;height:1px;border-top:1px dotted #c4c4c4"></div>
<div class="a t" style="left:182px;top:219.3px;width:59.5px;text-align:right;font-size:13px;letter-spacing:0px;color:#f01818">0,130816</div>
<div class="a t" style="left:243.5px;top:219.3px;width:60.2px;text-align:right;font-size:13px;letter-spacing:0px;color:#f01818">0,684110</div>
<div class="a t" style="left:305.7px;top:219.3px;width:64.7px;text-align:right;font-size:13px;letter-spacing:0px;color:#f01818">0,078773</div>
<div class="a t" style="left:372.4px;top:219.3px;width:69.8px;text-align:right;font-size:13px;letter-spacing:0px;color:#f01818">0,362598</div>
<div class="a t" style="left:444.2px;top:219.3px;width:63.3px;text-align:right;font-size:13px;letter-spacing:0px;color:#f01818">0,637402</div>
<div class="a t" style="left:509.5px;top:219.3px;width:60.0px;text-align:right;font-size:13px;letter-spacing:0px;color:#f01818">3,75174</div>
<div class="a t" style="left:571.5px;top:219.3px;width:59.2px;text-align:right;font-size:13px;letter-spacing:0px;color:#f01818">0,001741</div>
<svg class="a" style="left:128.5px;top:218.0px;" width="11.4" height="12.8" viewBox="0 0 11.4 12.8"><path d="M0.8 0.5L10.6 12.3M10.6 0.5L0.8 12.3" stroke="#2c2c2c" stroke-width="1.15"/></svg>
<div class="a t" style="left:139.6px;top:225.2px;font-size:11px;color:#202020">4</div>
<div class="a" style="left:126px;top:251.5px;width:56px;height:1px;background:#a8a49c"></div>
<div class="a" style="left:182px;top:251.5px;width:451px;height:1px;border-top:1px dotted #c4c4c4"></div>
<div class="a t" style="left:182px;top:236.5px;width:59.5px;text-align:right;font-size:13px;letter-spacing:0px;color:#242424">0,029722</div>
<div class="a t" style="left:243.5px;top:236.5px;width:60.2px;text-align:right;font-size:13px;letter-spacing:0px;color:#242424">0,267399</div>
<div class="a t" style="left:305.7px;top:236.5px;width:64.7px;text-align:right;font-size:13px;letter-spacing:0px;color:#242424">0,023306</div>
<div class="a t" style="left:372.4px;top:236.5px;width:69.8px;text-align:right;font-size:13px;letter-spacing:0px;color:#242424">0,614866</div>
<div class="a t" style="left:444.2px;top:236.5px;width:63.3px;text-align:right;font-size:13px;letter-spacing:0px;color:#242424">0,385134</div>
<div class="a t" style="left:509.5px;top:236.5px;width:60.0px;text-align:right;font-size:13px;letter-spacing:0px;color:#242424">1,11002</div>
<div class="a t" style="left:571.5px;top:236.5px;width:59.2px;text-align:right;font-size:13px;letter-spacing:0px;color:#242424">0,283397</div>
<svg class="a" style="left:128.5px;top:235.20000000000002px;" width="11.4" height="12.8" viewBox="0 0 11.4 12.8"><path d="M0.8 0.5L10.6 12.3M10.6 0.5L0.8 12.3" stroke="#2c2c2c" stroke-width="1.15"/></svg>
<div class="a t" style="left:139.6px;top:242.4px;font-size:11px;color:#202020">5</div>
<div class="a" style="left:126px;top:268.7px;width:56px;height:1px;background:#a8a49c"></div>
<div class="a" style="left:182px;top:268.7px;width:451px;height:1px;border-top:1px dotted #c4c4c4"></div>
<div class="a t" style="left:182px;top:253.7px;width:59.5px;text-align:right;font-size:13px;letter-spacing:0px;color:#242424">0,014818</div>
<div class="a t" style="left:243.5px;top:253.7px;width:60.2px;text-align:right;font-size:13px;letter-spacing:0px;color:#242424">0,144367</div>
<div class="a t" style="left:305.7px;top:253.7px;width:64.7px;text-align:right;font-size:13px;letter-spacing:0px;color:#242424">0,012253</div>
<div class="a t" style="left:372.4px;top:253.7px;width:69.8px;text-align:right;font-size:13px;letter-spacing:0px;color:#242424">0,683740</div>
<div class="a t" style="left:444.2px;top:253.7px;width:63.3px;text-align:right;font-size:13px;letter-spacing:0px;color:#242424">0,316260</div>
<div class="a t" style="left:509.5px;top:253.7px;width:60.0px;text-align:right;font-size:13px;letter-spacing:0px;color:#242424">0,58358</div>
<div class="a t" style="left:571.5px;top:253.7px;width:59.2px;text-align:right;font-size:13px;letter-spacing:0px;color:#242424">0,567639</div>
<svg class="a" style="left:128.5px;top:252.4px;" width="11.4" height="12.8" viewBox="0 0 11.4 12.8"><path d="M0.8 0.5L10.6 12.3M10.6 0.5L0.8 12.3" stroke="#2c2c2c" stroke-width="1.15"/></svg>
<div class="a t" style="left:139.6px;top:259.6px;font-size:11px;color:#202020">6</div>
<div class="a" style="left:126px;top:285.9px;width:56px;height:1px;background:#a8a49c"></div>
<div class="a" style="left:182px;top:285.9px;width:451px;height:1px;border-top:1px dotted #c4c4c4"></div>
<div class="a t" style="left:182px;top:270.9px;width:59.5px;text-align:right;font-size:13px;letter-spacing:0px;color:#242424">0,023483</div>
<div class="a t" style="left:243.5px;top:270.9px;width:60.2px;text-align:right;font-size:13px;letter-spacing:0px;color:#242424">0,248975</div>
<div class="a t" style="left:305.7px;top:270.9px;width:64.7px;text-align:right;font-size:13px;letter-spacing:0px;color:#242424">0,021590</div>
<div class="a t" style="left:372.4px;top:270.9px;width:69.8px;text-align:right;font-size:13px;letter-spacing:0px;color:#242424">0,845312</div>
<div class="a t" style="left:444.2px;top:270.9px;width:63.3px;text-align:right;font-size:13px;letter-spacing:0px;color:#242424">0,154688</div>
<div class="a t" style="left:509.5px;top:270.9px;width:60.0px;text-align:right;font-size:13px;letter-spacing:0px;color:#242424">1,02828</div>
<div class="a t" style="left:571.5px;top:270.9px;width:59.2px;text-align:right;font-size:13px;letter-spacing:0px;color:#242424">0,319113</div>
<svg class="a" style="left:128.5px;top:269.59999999999997px;" width="11.4" height="12.8" viewBox="0 0 11.4 12.8"><path d="M0.8 0.5L10.6 12.3M10.6 0.5L0.8 12.3" stroke="#2c2c2c" stroke-width="1.15"/></svg>
<div class="a t" style="left:139.6px;top:276.8px;font-size:11px;color:#202020">7</div>
<div class="a" style="left:243.0px;top:166px;width:1px;height:120.4px;border-left:1px solid #d8d8d8"></div>
<div class="a" style="left:305.2px;top:166px;width:1px;height:120.4px;border-left:1px solid #d8d8d8"></div>
<div class="a" style="left:371.9px;top:166px;width:1px;height:120.4px;border-left:1px solid #d8d8d8"></div>
<div class="a" style="left:443.7px;top:166px;width:1px;height:120.4px;border-left:1px solid #d8d8d8"></div>
<div class="a" style="left:509.0px;top:166px;width:1px;height:120.4px;border-left:1px solid #d8d8d8"></div>
<div class="a" style="left:571.0px;top:166px;width:1px;height:120.4px;border-left:1px solid #d8d8d8"></div>
<div class="a" style="left:182px;top:132.5px;width:827px;height:1px;background:#383838"></div>
<div class="a" style="left:126px;top:165.5px;width:883px;height:1.2px;background:#202020"></div>
<div class="a" style="left:243.0px;top:133px;width:1px;height:33px;background:#585858"></div>
<div class="a" style="left:305.2px;top:133px;width:1px;height:33px;background:#585858"></div>
<div class="a" style="left:371.9px;top:133px;width:1px;height:33px;background:#585858"></div>
<div class="a" style="left:443.7px;top:133px;width:1px;height:33px;background:#585858"></div>
<div class="a" style="left:509.0px;top:133px;width:1px;height:33px;background:#585858"></div>
<div class="a" style="left:571.0px;top:133px;width:1px;height:33px;background:#585858"></div>
<div class="a" style="left:632.2px;top:133px;width:1px;height:33px;background:#585858"></div>
<div class="a" style="left:181.6px;top:116px;width:1.2px;height:532px;background:#202020"></div>
<div class="a" style="left:183px;top:166.5px;width:60px;height:16.5px;border-top:1px solid #101010;border-left:1px solid #101010;border-right:2px solid #101010;border-bottom:2px solid #101010"></div>
<div class="a" style="left:240px;top:180px;width:6.5px;height:6.5px;background:#101010;border:1px solid #fff"></div>
<div class="a" style="left:1009px;top:116px;width:16px;height:532px;background:#F4F2EA"></div>
<div class="a" style="left:1009px;top:116px;width:16px;height:6px;background:#fff"></div>
<div class="a" style="left:1025px;top:115px;width:1px;height:7px;background:#303030"></div>
<div class="a" style="left:1009px;top:121.5px;width:16px;height:1px;background:#303030"></div>
<div class="a" style="left:1009px;top:122.5px;width:16px;height:17px;background:#F3F1E6;border-top:1px solid #fff;border-left:1px solid #fff;border-right:1px solid #8a8678;border-bottom:1px solid #8a8678"></div>
<svg class="a" style="left:1013px;top:128px;" width="8" height="5" viewBox="0 0 8 5" shape-rendering="crispEdges"><path d="M0 4H8L4 0Z" fill="#aca899"/></svg>
<div class="a" style="left:1009px;top:632px;width:16px;height:16.5px;background:#F3F1E6;border-top:1px solid #fff;border-left:1px solid #fff;border-right:1px solid #8a8678;border-bottom:1px solid #8a8678"></div>
<svg class="a" style="left:1013px;top:638px;" width="8" height="5" viewBox="0 0 8 5" shape-rendering="crispEdges"><path d="M0 0H8L4 4Z" fill="#aca899"/></svg>
<div class="a" style="left:126px;top:648.5px;width:883px;height:17px;background:#F4F2EA"></div>
<div class="a" style="left:126px;top:648.5px;width:7px;height:17px;background:#fff;border-right:1px solid #202020;border-bottom:1px solid #202020"></div>
<div class="a" style="left:133px;top:648.5px;width:16.5px;height:17px;background:#F3F1E6;border-top:1px solid #fff;border-left:1px solid #fff;border-right:1px solid #8a8678;border-bottom:1px solid #8a8678"></div>
<svg class="a" style="left:138px;top:653px;" width="5" height="8" viewBox="0 0 5 8" shape-rendering="crispEdges"><path d="M4 0V8L0 4Z" fill="#aca899"/></svg>
<div class="a" style="left:992.7px;top:648.5px;width:16px;height:17px;background:#F3F1E6;border-top:1px solid #fff;border-left:1px solid #fff;border-right:1px solid #8a8678;border-bottom:1px solid #8a8678"></div>
<svg class="a" style="left:998px;top:653px;" width="5" height="8" viewBox="0 0 5 8" shape-rendering="crispEdges"><path d="M0 0V8L4 4Z" fill="#aca899"/></svg>
<div class="a" style="left:1009px;top:648.5px;width:16px;height:17px;background:#F3F1E6"></div>
<div class="a" style="left:0px;top:109px;width:118px;height:567px;background:#fff"></div>
<div class="a" style="left:8px;top:122px;width:1px;height:6px;border-left:1px dotted #a0a0a0"></div>
<div class="a" style="left:27px;top:138px;width:1px;height:71px;border-left:1px dotted #a0a0a0"></div>
<div class="a" style="left:46.5px;top:154px;width:1px;height:44px;border-left:1px dotted #a0a0a0"></div>
<div class="a" style="left:46.5px;top:219px;width:1px;height:91px;border-left:1px dotted #a0a0a0"></div>
<svg class="a" style="left:0px;top:110px;" width="16" height="12.5" viewBox="0 0 16 12.5"><path d="M1 2.2Q1 0.8 2.4 0.8H5.2L6.6 2.2H12.2V9.8H1Z" fill="#f4f890" stroke="#2a2a2a" stroke-width="1"/><path d="M2.5 3H5.5" stroke="#fff" stroke-width="1"/><path d="M1 10.4L3.4 4.4H15.2L12.8 10.4Z" fill="#eef458" stroke="#2a2a2a" stroke-width="1"/><path d="M4.5 6.2H10" stroke="#fcfcc0" stroke-width="1"/><path d="M1.6 11.6H13.4L15.8 5.2" fill="none" stroke="#101010" stroke-width="1.5"/></svg>
<div class="a" style="left:22.4px;top:111.3px;width:95.6px;height:14px;overflow:hidden"><div class="t" style="font-size:11px;letter-spacing:0.85px;color:#1a1a1a;padding-top:0px">Workbook1*</div></div>
<div class="a" style="left:4px;top:127.47999999999999px;width:9px;height:9px;background:#fff;border:1px solid #a8a8a0"></div>
<div class="a" style="left:6px;top:131.48px;width:5px;height:1px;background:#000"></div>
<div class="a" style="left:13px;top:132.0px;width:6px;height:1px;border-top:1px dotted #a0a0a0"></div>
<svg class="a" style="left:19px;top:125.47999999999999px;" width="16" height="12.5" viewBox="0 0 16 12.5"><path d="M1 2.2Q1 0.8 2.4 0.8H5.2L6.6 2.2H12.2V9.8H1Z" fill="#f4f890" stroke="#2a2a2a" stroke-width="1"/><path d="M2.5 3H5.5" stroke="#fff" stroke-width="1"/><path d="M1 10.4L3.4 4.4H15.2L12.8 10.4Z" fill="#eef458" stroke="#2a2a2a" stroke-width="1"/><path d="M4.5 6.2H10" stroke="#fcfcc0" stroke-width="1"/><path d="M1.6 11.6H13.4L15.8 5.2" fill="none" stroke="#101010" stroke-width="1.5"/></svg>
<div class="a" style="left:40.4px;top:127.5px;width:77.6px;height:14px;overflow:hidden"><div class="t" style="font-size:11px;letter-spacing:0.85px;color:#1a1a1a;padding-top:0px">Multiple Regression</div></div>
<div class="a" style="left:23px;top:143.66px;width:9px;height:9px;background:#fff;border:1px solid #a8a8a0"></div>
<div class="a" style="left:25px;top:147.66px;width:5px;height:1px;background:#000"></div>
<div class="a" style="left:32px;top:148.2px;width:6px;height:1px;border-top:1px dotted #a0a0a0"></div>
<svg class="a" style="left:38.4px;top:141.66px;" width="16" height="12.5" viewBox="0 0 16 12.5"><path d="M1 2.2Q1 0.8 2.4 0.8H5.2L6.6 2.2H12.2V9.8H1Z" fill="#f4f890" stroke="#2a2a2a" stroke-width="1"/><path d="M2.5 3H5.5" stroke="#fff" stroke-width="1"/><path d="M1 10.4L3.4 4.4H15.2L12.8 10.4Z" fill="#eef458" stroke="#2a2a2a" stroke-width="1"/><path d="M4.5 6.2H10" stroke="#fcfcc0" stroke-width="1"/><path d="M1.6 11.6H13.4L15.8 5.2" fill="none" stroke="#101010" stroke-width="1.5"/></svg>
<div class="a" style="left:60.5px;top:143.7px;width:57.5px;height:14px;overflow:hidden"><div class="t" style="font-size:11px;letter-spacing:0.85px;color:#1a1a1a;padding-top:0px">Regression results</div></div>
<div class="a" style="left:47px;top:164.3px;width:11px;height:1px;border-top:1px dotted #a0a0a0"></div>
<svg class="a" style="left:58px;top:156.84px;" width="16" height="15" viewBox="0 0 16 15" shape-rendering="crispEdges"><rect x="0.5" y="0.5" width="15" height="14" fill="#fff" stroke="#202020"/><rect x="7" y="2" width="2" height="1.3" fill="#3040b0"/><rect x="10" y="2" width="2" height="1.3" fill="#3040b0"/><rect x="13" y="2" width="1.5" height="1.3" fill="#3040b0"/><rect x="2" y="4" width="2" height="1" fill="#3040b0"/><rect x="6" y="4" width="3" height="1" fill="#a0a0a0"/><rect x="10" y="4" width="2" height="1" fill="#a0a0a0"/><rect x="13" y="4" width="1.5" height="1" fill="#a0a0a0"/><rect x="2" y="6" width="2" height="1" fill="#3040b0"/><rect x="6" y="6" width="3" height="1" fill="#a0a0a0"/><rect x="10" y="6" width="2" height="1" fill="#a0a0a0"/><rect x="13" y="6" width="1.5" height="1" fill="#a0a0a0"/><rect x="2" y="8" width="2" height="1" fill="#3040b0"/><rect x="6" y="8" width="3" height="1" fill="#a0a0a0"/><rect x="10" y="8" width="2" height="1" fill="#a0a0a0"/><rect x="13" y="8" width="1.5" height="1" fill="#a0a0a0"/><rect x="2" y="10" width="2" height="1" fill="#3040b0"/><rect x="6" y="10" width="3" height="1" fill="#a0a0a0"/><rect x="10" y="10" width="2" height="1" fill="#a0a0a0"/><rect x="13" y="10" width="1.5" height="1" fill="#a0a0a0"/><rect x="2" y="12" width="2" height="1" fill="#3040b0"/><rect x="6" y="12" width="3" height="1" fill="#a0a0a0"/><rect x="10" y="12" width="2" height="1" fill="#a0a0a0"/><rect x="13" y="12" width="1.5" height="1" fill="#a0a0a0"/></svg>
<div class="a" style="left:80px;top:159.8px;width:38.0px;height:14px;overflow:hidden"><div class="t" style="font-size:11px;letter-spacing:0.85px;color:#1a1a1a;padding-top:0px">Summary</div></div>
<div class="a" style="left:47px;top:180.5px;width:11px;height:1px;border-top:1px dotted #a0a0a0"></div>
<svg class="a" style="left:58px;top:173.01999999999998px;" width="16" height="15" viewBox="0 0 16 15" shape-rendering="crispEdges"><rect x="0.5" y="0.5" width="15" height="14" fill="#fff" stroke="#202020"/><rect x="7" y="2" width="2" height="1.3" fill="#3040b0"/><rect x="10" y="2" width="2" height="1.3" fill="#3040b0"/><rect x="13" y="2" width="1.5" height="1.3" fill="#3040b0"/><rect x="2" y="4" width="2" height="1" fill="#3040b0"/><rect x="6" y="4" width="3" height="1" fill="#a0a0a0"/><rect x="10" y="4" width="2" height="1" fill="#a0a0a0"/><rect x="13" y="4" width="1.5" height="1" fill="#a0a0a0"/><rect x="2" y="6" width="2" height="1" fill="#3040b0"/><rect x="6" y="6" width="3" height="1" fill="#a0a0a0"/><rect x="10" y="6" width="2" height="1" fill="#a0a0a0"/><rect x="13" y="6" width="1.5" height="1" fill="#a0a0a0"/><rect x="2" y="8" width="2" height="1" fill="#3040b0"/><rect x="6" y="8" width="3" height="1" fill="#a0a0a0"/><rect x="10" y="8" width="2" height="1" fill="#a0a0a0"/><rect x="13" y="8" width="1.5" height="1" fill="#a0a0a0"/><rect x="2" y="10" width="2" height="1" fill="#3040b0"/><rect x="6" y="10" width="3" height="1" fill="#a0a0a0"/><rect x="10" y="10" width="2" height="1" fill="#a0a0a0"/><rect x="13" y="10" width="1.5" height="1" fill="#a0a0a0"/><rect x="2" y="12" width="2" height="1" fill="#3040b0"/><rect x="6" y="12" width="3" height="1" fill="#a0a0a0"/><rect x="10" y="12" width="2" height="1" fill="#a0a0a0"/><rect x="13" y="12" width="1.5" height="1" fill="#a0a0a0"/></svg>
<div class="a" style="left:80px;top:176.0px;width:38.0px;height:14px;overflow:hidden"><div class="t" style="font-size:11px;letter-spacing:0.85px;color:#1a1a1a;padding-top:0px">Regression</div></div>
<div class="a" style="left:47px;top:196.7px;width:11px;height:1px;border-top:1px dotted #a0a0a0"></div>
<svg class="a" style="left:58px;top:189.2px;" width="16" height="15" viewBox="0 0 16 15" shape-rendering="crispEdges"><rect x="0.5" y="0.5" width="15" height="14" fill="#fff" stroke="#202020"/><rect x="7" y="2" width="2" height="1.3" fill="#3040b0"/><rect x="10" y="2" width="2" height="1.3" fill="#3040b0"/><rect x="13" y="2" width="1.5" height="1.3" fill="#3040b0"/><rect x="2" y="4" width="2" height="1" fill="#3040b0"/><rect x="6" y="4" width="3" height="1" fill="#a0a0a0"/><rect x="10" y="4" width="2" height="1" fill="#a0a0a0"/><rect x="13" y="4" width="1.5" height="1" fill="#a0a0a0"/><rect x="2" y="6" width="2" height="1" fill="#3040b0"/><rect x="6" y="6" width="3" height="1" fill="#a0a0a0"/><rect x="10" y="6" width="2" height="1" fill="#a0a0a0"/><rect x="13" y="6" width="1.5" height="1" fill="#a0a0a0"/><rect x="2" y="8" width="2" height="1" fill="#3040b0"/><rect x="6" y="8" width="3" height="1" fill="#a0a0a0"/><rect x="10" y="8" width="2" height="1" fill="#a0a0a0"/><rect x="13" y="8" width="1.5" height="1" fill="#a0a0a0"/><rect x="2" y="10" width="2" height="1" fill="#3040b0"/><rect x="6" y="10" width="3" height="1" fill="#a0a0a0"/><rect x="10" y="10" width="2" height="1" fill="#a0a0a0"/><rect x="13" y="10" width="1.5" height="1" fill="#a0a0a0"/><rect x="2" y="12" width="2" height="1" fill="#3040b0"/><rect x="6" y="12" width="3" height="1" fill="#a0a0a0"/><rect x="10" y="12" width="2" height="1" fill="#a0a0a0"/><rect x="13" y="12" width="1.5" height="1" fill="#a0a0a0"/></svg>
<div class="a" style="left:80px;top:192.2px;width:38.0px;height:14px;overflow:hidden"><div class="t" style="font-size:11px;letter-spacing:0.85px;color:#1a1a1a;padding-top:0px">Durbin-Watson</div></div>
<div class="a" style="left:23px;top:208.38px;width:9px;height:9px;background:#fff;border:1px solid #a8a8a0"></div>
<div class="a" style="left:25px;top:212.38px;width:5px;height:1px;background:#000"></div>
<div class="a" style="left:32px;top:212.9px;width:6px;height:1px;border-top:1px dotted #a0a0a0"></div>
<svg class="a" style="left:38.4px;top:206.38px;" width="16" height="12.5" viewBox="0 0 16 12.5"><path d="M1 2.2Q1 0.8 2.4 0.8H5.2L6.6 2.2H12.2V9.8H1Z" fill="#f4f890" stroke="#2a2a2a" stroke-width="1"/><path d="M2.5 3H5.5" stroke="#fff" stroke-width="1"/><path d="M1 10.4L3.4 4.4H15.2L12.8 10.4Z" fill="#eef458" stroke="#2a2a2a" stroke-width="1"/><path d="M4.5 6.2H10" stroke="#fcfcc0" stroke-width="1"/><path d="M1.6 11.6H13.4L15.8 5.2" fill="none" stroke="#101010" stroke-width="1.5"/></svg>
<div class="a" style="left:60.5px;top:208.4px;width:57.5px;height:14px;overflow:hidden"><div class="t" style="font-size:11px;letter-spacing:0.85px;color:#1a1a1a;padding-top:0px">Regression results</div></div>
<div class="a" style="left:47px;top:229.1px;width:11px;height:1px;border-top:1px dotted #a0a0a0"></div>
<svg class="a" style="left:58px;top:221.56px;" width="16" height="15" viewBox="0 0 16 15" shape-rendering="crispEdges"><rect x="0.5" y="0.5" width="15" height="14" fill="#fff" stroke="#202020"/><rect x="7" y="2" width="2" height="1.3" fill="#3040b0"/><rect x="10" y="2" width="2" height="1.3" fill="#3040b0"/><rect x="13" y="2" width="1.5" height="1.3" fill="#3040b0"/><rect x="2" y="4" width="2" height="1" fill="#3040b0"/><rect x="6" y="4" width="3" height="1" fill="#a0a0a0"/><rect x="10" y="4" width="2" height="1" fill="#a0a0a0"/><rect x="13" y="4" width="1.5" height="1" fill="#a0a0a0"/><rect x="2" y="6" width="2" height="1" fill="#3040b0"/><rect x="6" y="6" width="3" height="1" fill="#a0a0a0"/><rect x="10" y="6" width="2" height="1" fill="#a0a0a0"/><rect x="13" y="6" width="1.5" height="1" fill="#a0a0a0"/><rect x="2" y="8" width="2" height="1" fill="#3040b0"/><rect x="6" y="8" width="3" height="1" fill="#a0a0a0"/><rect x="10" y="8" width="2" height="1" fill="#a0a0a0"/><rect x="13" y="8" width="1.5" height="1" fill="#a0a0a0"/><rect x="2" y="10" width="2" height="1" fill="#3040b0"/><rect x="6" y="10" width="3" height="1" fill="#a0a0a0"/><rect x="10" y="10" width="2" height="1" fill="#a0a0a0"/><rect x="13" y="10" width="1.5" height="1" fill="#a0a0a0"/><rect x="2" y="12" width="2" height="1" fill="#3040b0"/><rect x="6" y="12" width="3" height="1" fill="#a0a0a0"/><rect x="10" y="12" width="2" height="1" fill="#a0a0a0"/><rect x="13" y="12" width="1.5" height="1" fill="#a0a0a0"/></svg>
<div class="a" style="left:77px;top:220.9px;width:41px;height:16px;background:#0a9ae4;border:1px dotted #e06020"></div>
<div class="a" style="left:80px;top:224.6px;width:38.0px;height:14px;overflow:hidden"><div class="t" style="font-size:11px;letter-spacing:0.85px;color:#fff;padding-top:0px">Variables</div></div>
<div class="a" style="left:47px;top:245.2px;width:11px;height:1px;border-top:1px dotted #a0a0a0"></div>
<svg class="a" style="left:58px;top:237.74px;" width="16" height="15" viewBox="0 0 16 15" shape-rendering="crispEdges"><rect x="0.5" y="0.5" width="15" height="14" fill="#fff" stroke="#202020"/><rect x="7" y="2" width="2" height="1.3" fill="#3040b0"/><rect x="10" y="2" width="2" height="1.3" fill="#3040b0"/><rect x="13" y="2" width="1.5" height="1.3" fill="#3040b0"/><rect x="2" y="4" width="2" height="1" fill="#3040b0"/><rect x="6" y="4" width="3" height="1" fill="#a0a0a0"/><rect x="10" y="4" width="2" height="1" fill="#a0a0a0"/><rect x="13" y="4" width="1.5" height="1" fill="#a0a0a0"/><rect x="2" y="6" width="2" height="1" fill="#3040b0"/><rect x="6" y="6" width="3" height="1" fill="#a0a0a0"/><rect x="10" y="6" width="2" height="1" fill="#a0a0a0"/><rect x="13" y="6" width="1.5" height="1" fill="#a0a0a0"/><rect x="2" y="8" width="2" height="1" fill="#3040b0"/><rect x="6" y="8" width="3" height="1" fill="#a0a0a0"/><rect x="10" y="8" width="2" height="1" fill="#a0a0a0"/><rect x="13" y="8" width="1.5" height="1" fill="#a0a0a0"/><rect x="2" y="10" width="2" height="1" fill="#3040b0"/><rect x="6" y="10" width="3" height="1" fill="#a0a0a0"/><rect x="10" y="10" width="2" height="1" fill="#a0a0a0"/><rect x="13" y="10" width="1.5" height="1" fill="#a0a0a0"/><rect x="2" y="12" width="2" height="1" fill="#3040b0"/><rect x="6" y="12" width="3" height="1" fill="#a0a0a0"/><rect x="10" y="12" width="2" height="1" fill="#a0a0a0"/><rect x="13" y="12" width="1.5" height="1" fill="#a0a0a0"/></svg>
<div class="a" style="left:80px;top:240.7px;width:38.0px;height:14px;overflow:hidden"><div class="t" style="font-size:11px;letter-spacing:0.85px;color:#1a1a1a;padding-top:0px">Redundancy</div></div>
<div class="a" style="left:47px;top:261.4px;width:11px;height:1px;border-top:1px dotted #a0a0a0"></div>
<svg class="a" style="left:58px;top:253.92000000000002px;" width="16" height="15" viewBox="0 0 16 15" shape-rendering="crispEdges"><rect x="0.5" y="0.5" width="15" height="14" fill="#fff" stroke="#202020"/><rect x="7" y="2" width="2" height="1.3" fill="#3040b0"/><rect x="10" y="2" width="2" height="1.3" fill="#3040b0"/><rect x="13" y="2" width="1.5" height="1.3" fill="#3040b0"/><rect x="2" y="4" width="2" height="1" fill="#3040b0"/><rect x="6" y="4" width="3" height="1" fill="#a0a0a0"/><rect x="10" y="4" width="2" height="1" fill="#a0a0a0"/><rect x="13" y="4" width="1.5" height="1" fill="#a0a0a0"/><rect x="2" y="6" width="2" height="1" fill="#3040b0"/><rect x="6" y="6" width="3" height="1" fill="#a0a0a0"/><rect x="10" y="6" width="2" height="1" fill="#a0a0a0"/><rect x="13" y="6" width="1.5" height="1" fill="#a0a0a0"/><rect x="2" y="8" width="2" height="1" fill="#3040b0"/><rect x="6" y="8" width="3" height="1" fill="#a0a0a0"/><rect x="10" y="8" width="2" height="1" fill="#a0a0a0"/><rect x="13" y="8" width="1.5" height="1" fill="#a0a0a0"/><rect x="2" y="10" width="2" height="1" fill="#3040b0"/><rect x="6" y="10" width="3" height="1" fill="#a0a0a0"/><rect x="10" y="10" width="2" height="1" fill="#a0a0a0"/><rect x="13" y="10" width="1.5" height="1" fill="#a0a0a0"/><rect x="2" y="12" width="2" height="1" fill="#3040b0"/><rect x="6" y="12" width="3" height="1" fill="#a0a0a0"/><rect x="10" y="12" width="2" height="1" fill="#a0a0a0"/><rect x="13" y="12" width="1.5" height="1" fill="#a0a0a0"/></svg>
<div class="a" style="left:80px;top:256.9px;width:38.0px;height:14px;overflow:hidden"><div class="t" style="font-size:11px;letter-spacing:0.85px;color:#1a1a1a;padding-top:0px">Correlations</div></div>
<div class="a" style="left:47px;top:277.6px;width:11px;height:1px;border-top:1px dotted #a0a0a0"></div>
<svg class="a" style="left:58px;top:270.1px;" width="16" height="15" viewBox="0 0 16 15" shape-rendering="crispEdges"><rect x="0.5" y="0.5" width="15" height="14" fill="#fff" stroke="#202020"/><rect x="7" y="2" width="2" height="1.3" fill="#3040b0"/><rect x="10" y="2" width="2" height="1.3" fill="#3040b0"/><rect x="13" y="2" width="1.5" height="1.3" fill="#3040b0"/><rect x="2" y="4" width="2" height="1" fill="#3040b0"/><rect x="6" y="4" width="3" height="1" fill="#a0a0a0"/><rect x="10" y="4" width="2" height="1" fill="#a0a0a0"/><rect x="13" y="4" width="1.5" height="1" fill="#a0a0a0"/><rect x="2" y="6" width="2" height="1" fill="#3040b0"/><rect x="6" y="6" width="3" height="1" fill="#a0a0a0"/><rect x="10" y="6" width="2" height="1" fill="#a0a0a0"/><rect x="13" y="6" width="1.5" height="1" fill="#a0a0a0"/><rect x="2" y="8" width="2" height="1" fill="#3040b0"/><rect x="6" y="8" width="3" height="1" fill="#a0a0a0"/><rect x="10" y="8" width="2" height="1" fill="#a0a0a0"/><rect x="13" y="8" width="1.5" height="1" fill="#a0a0a0"/><rect x="2" y="10" width="2" height="1" fill="#3040b0"/><rect x="6" y="10" width="3" height="1" fill="#a0a0a0"/><rect x="10" y="10" width="2" height="1" fill="#a0a0a0"/><rect x="13" y="10" width="1.5" height="1" fill="#a0a0a0"/><rect x="2" y="12" width="2" height="1" fill="#3040b0"/><rect x="6" y="12" width="3" height="1" fill="#a0a0a0"/><rect x="10" y="12" width="2" height="1" fill="#a0a0a0"/><rect x="13" y="12" width="1.5" height="1" fill="#a0a0a0"/></svg>
<div class="a" style="left:80px;top:273.1px;width:38.0px;height:14px;overflow:hidden"><div class="t" style="font-size:11px;letter-spacing:0.85px;color:#1a1a1a;padding-top:0px">Covariances</div></div>
<div class="a" style="left:47px;top:293.8px;width:11px;height:1px;border-top:1px dotted #a0a0a0"></div>
<svg class="a" style="left:58px;top:286.28px;" width="16" height="15" viewBox="0 0 16 15" shape-rendering="crispEdges"><rect x="0.5" y="0.5" width="15" height="14" fill="#fff" stroke="#202020"/><rect x="7" y="2" width="2" height="1.3" fill="#3040b0"/><rect x="10" y="2" width="2" height="1.3" fill="#3040b0"/><rect x="13" y="2" width="1.5" height="1.3" fill="#3040b0"/><rect x="2" y="4" width="2" height="1" fill="#3040b0"/><rect x="6" y="4" width="3" height="1" fill="#a0a0a0"/><rect x="10" y="4" width="2" height="1" fill="#a0a0a0"/><rect x="13" y="4" width="1.5" height="1" fill="#a0a0a0"/><rect x="2" y="6" width="2" height="1" fill="#3040b0"/><rect x="6" y="6" width="3" height="1" fill="#a0a0a0"/><rect x="10" y="6" width="2" height="1" fill="#a0a0a0"/><rect x="13" y="6" width="1.5" height="1" fill="#a0a0a0"/><rect x="2" y="8" width="2" height="1" fill="#3040b0"/><rect x="6" y="8" width="3" height="1" fill="#a0a0a0"/><rect x="10" y="8" width="2" height="1" fill="#a0a0a0"/><rect x="13" y="8" width="1.5" height="1" fill="#a0a0a0"/><rect x="2" y="10" width="2" height="1" fill="#3040b0"/><rect x="6" y="10" width="3" height="1" fill="#a0a0a0"/><rect x="10" y="10" width="2" height="1" fill="#a0a0a0"/><rect x="13" y="10" width="1.5" height="1" fill="#a0a0a0"/><rect x="2" y="12" width="2" height="1" fill="#3040b0"/><rect x="6" y="12" width="3" height="1" fill="#a0a0a0"/><rect x="10" y="12" width="2" height="1" fill="#a0a0a0"/><rect x="13" y="12" width="1.5" height="1" fill="#a0a0a0"/></svg>
<div class="a" style="left:80px;top:289.3px;width:38.0px;height:14px;overflow:hidden"><div class="t" style="font-size:11px;letter-spacing:0.85px;color:#1a1a1a;padding-top:0px">Summary</div></div>
<div class="a" style="left:47px;top:310.0px;width:11px;height:1px;border-top:1px dotted #a0a0a0"></div>
<svg class="a" style="left:58px;top:302.46px;" width="16" height="15" viewBox="0 0 16 15" shape-rendering="crispEdges"><rect x="0.5" y="0.5" width="15" height="14" fill="#fff" stroke="#202020"/><rect x="7" y="2" width="2" height="1.3" fill="#3040b0"/><rect x="10" y="2" width="2" height="1.3" fill="#3040b0"/><rect x="13" y="2" width="1.5" height="1.3" fill="#3040b0"/><rect x="2" y="4" width="2" height="1" fill="#3040b0"/><rect x="6" y="4" width="3" height="1" fill="#a0a0a0"/><rect x="10" y="4" width="2" height="1" fill="#a0a0a0"/><rect x="13" y="4" width="1.5" height="1" fill="#a0a0a0"/><rect x="2" y="6" width="2" height="1" fill="#3040b0"/><rect x="6" y="6" width="3" height="1" fill="#a0a0a0"/><rect x="10" y="6" width="2" height="1" fill="#a0a0a0"/><rect x="13" y="6" width="1.5" height="1" fill="#a0a0a0"/><rect x="2" y="8" width="2" height="1" fill="#3040b0"/><rect x="6" y="8" width="3" height="1" fill="#a0a0a0"/><rect x="10" y="8" width="2" height="1" fill="#a0a0a0"/><rect x="13" y="8" width="1.5" height="1" fill="#a0a0a0"/><rect x="2" y="10" width="2" height="1" fill="#3040b0"/><rect x="6" y="10" width="3" height="1" fill="#a0a0a0"/><rect x="10" y="10" width="2" height="1" fill="#a0a0a0"/><rect x="13" y="10" width="1.5" height="1" fill="#a0a0a0"/><rect x="2" y="12" width="2" height="1" fill="#3040b0"/><rect x="6" y="12" width="3" height="1" fill="#a0a0a0"/><rect x="10" y="12" width="2" height="1" fill="#a0a0a0"/><rect x="13" y="12" width="1.5" height="1" fill="#a0a0a0"/></svg>
<div class="a" style="left:80px;top:305.5px;width:38.0px;height:14px;overflow:hidden"><div class="t" style="font-size:11px;letter-spacing:0.85px;color:#1a1a1a;padding-top:0px">Regression</div></div>
<div class="a" style="left:0px;top:676px;width:118px;height:16px;background:#fbfbf8"></div>
<div class="a" style="left:0px;top:676px;width:16px;height:16px;background:linear-gradient(#fdfdfb,#eef0f4);border:1px solid #d8dce4;border-radius:2px"></div>
<svg class="a" style="left:4px;top:680px;" width="8" height="8" viewBox="0 0 8 8"><path d="M6 0.5L2 4L6 7.5" fill="none" stroke="#4d6185" stroke-width="2"/></svg>
<div class="a" style="left:18px;top:676px;width:20px;height:16px;background:linear-gradient(#fdfdfb,#eef0f4);border:1px solid #d8dce4;border-radius:2px"></div>
<svg class="a" style="left:24px;top:680px;" width="8" height="8" viewBox="0 0 8 8" shape-rendering="crispEdges"><path d="M0.5 0V8M2.5 0V8M4.5 0V8M6.5 0V8" stroke="#b8bcc8"/></svg>
<div class="a" style="left:101px;top:676px;width:17px;height:16px;background:linear-gradient(#fdfdfb,#eef0f4);border:1px solid #d8dce4;border-radius:2px"></div>
<svg class="a" style="left:106px;top:680px;" width="8" height="8" viewBox="0 0 8 8"><path d="M2 0.5L6 4L2 7.5" fill="none" stroke="#4d6185" stroke-width="2"/></svg>
<div class="a" style="left:120px;top:691px;width:307px;height:1.5px;background:#8a8678"></div>
<div class="a" style="left:427px;top:670.5px;width:607px;height:1.5px;background:#8a8678"></div>
<div class="a" style="left:427px;top:689.5px;width:326px;height:1.5px;background:#8a8678"></div>
<div class="a" style="left:427px;top:671px;width:1.3px;height:19px;background:#8a8678"></div>
<div class="a" style="left:753px;top:671px;width:1.3px;height:19px;background:#8a8678"></div>
<div class="a" style="left:756px;top:689.5px;width:278px;height:1.5px;background:#8a8678"></div>
<svg class="a" style="left:126px;top:676px;" width="16" height="15" viewBox="0 0 16 15" shape-rendering="crispEdges"><rect x="0.5" y="0.5" width="15" height="14" fill="#fff" stroke="#202020"/><rect x="7" y="2" width="2" height="1.3" fill="#3040b0"/><rect x="10" y="2" width="2" height="1.3" fill="#3040b0"/><rect x="13" y="2" width="1.5" height="1.3" fill="#3040b0"/><rect x="2" y="4" width="2" height="1" fill="#3040b0"/><rect x="6" y="4" width="3" height="1" fill="#a0a0a0"/><rect x="10" y="4" width="2" height="1" fill="#a0a0a0"/><rect x="13" y="4" width="1.5" height="1" fill="#a0a0a0"/><rect x="2" y="6" width="2" height="1" fill="#3040b0"/><rect x="6" y="6" width="3" height="1" fill="#a0a0a0"/><rect x="10" y="6" width="2" height="1" fill="#a0a0a0"/><rect x="13" y="6" width="1.5" height="1" fill="#a0a0a0"/><rect x="2" y="8" width="2" height="1" fill="#3040b0"/><rect x="6" y="8" width="3" height="1" fill="#a0a0a0"/><rect x="10" y="8" width="2" height="1" fill="#a0a0a0"/><rect x="13" y="8" width="1.5" height="1" fill="#a0a0a0"/><rect x="2" y="10" width="2" height="1" fill="#3040b0"/><rect x="6" y="10" width="3" height="1" fill="#a0a0a0"/><rect x="10" y="10" width="2" height="1" fill="#a0a0a0"/><rect x="13" y="10" width="1.5" height="1" fill="#a0a0a0"/><rect x="2" y="12" width="2" height="1" fill="#3040b0"/><rect x="6" y="12" width="3" height="1" fill="#a0a0a0"/><rect x="10" y="12" width="2" height="1" fill="#a0a0a0"/><rect x="13" y="12" width="1.5" height="1" fill="#a0a0a0"/></svg>
<div class="a t" style="left:148px;top:676.5px;font-size:12px;transform:scaleX(0.89);transform-origin:0 0;color:#1a1a1a">Variables currently in the Equation; DV: Y (Spreadsheet1)</div>
<svg class="a" style="left:432px;top:674px;" width="16" height="15" viewBox="0 0 16 15" shape-rendering="crispEdges"><rect x="0.5" y="0.5" width="15" height="14" fill="#fff" stroke="#202020"/><rect x="7" y="2" width="2" height="1.3" fill="#3040b0"/><rect x="10" y="2" width="2" height="1.3" fill="#3040b0"/><rect x="13" y="2" width="1.5" height="1.3" fill="#3040b0"/><rect x="2" y="4" width="2" height="1" fill="#3040b0"/><rect x="6" y="4" width="3" height="1" fill="#a0a0a0"/><rect x="10" y="4" width="2" height="1" fill="#a0a0a0"/><rect x="13" y="4" width="1.5" height="1" fill="#a0a0a0"/><rect x="2" y="6" width="2" height="1" fill="#3040b0"/><rect x="6" y="6" width="3" height="1" fill="#a0a0a0"/><rect x="10" y="6" width="2" height="1" fill="#a0a0a0"/><rect x="13" y="6" width="1.5" height="1" fill="#a0a0a0"/><rect x="2" y="8" width="2" height="1" fill="#3040b0"/><rect x="6" y="8" width="3" height="1" fill="#a0a0a0"/><rect x="10" y="8" width="2" height="1" fill="#a0a0a0"/><rect x="13" y="8" width="1.5" height="1" fill="#a0a0a0"/><rect x="2" y="10" width="2" height="1" fill="#3040b0"/><rect x="6" y="10" width="3" height="1" fill="#a0a0a0"/><rect x="10" y="10" width="2" height="1" fill="#a0a0a0"/><rect x="13" y="10" width="1.5" height="1" fill="#a0a0a0"/><rect x="2" y="12" width="2" height="1" fill="#3040b0"/><rect x="6" y="12" width="3" height="1" fill="#a0a0a0"/><rect x="10" y="12" width="2" height="1" fill="#a0a0a0"/><rect x="13" y="12" width="1.5" height="1" fill="#a0a0a0"/></svg>
<div class="a t" style="left:454.5px;top:674.9px;font-size:12px;transform:scaleX(0.896);transform-origin:0 0;color:#1a1a1a">Redundancy of Independent Variables; DV: Y (Spreadsheet1)</div>
<svg class="a" style="left:760px;top:674px;" width="16" height="15" viewBox="0 0 16 15" shape-rendering="crispEdges"><rect x="0.5" y="0.5" width="15" height="14" fill="#fff" stroke="#202020"/><rect x="7" y="2" width="2" height="1.3" fill="#3040b0"/><rect x="10" y="2" width="2" height="1.3" fill="#3040b0"/><rect x="13" y="2" width="1.5" height="1.3" fill="#3040b0"/><rect x="2" y="4" width="2" height="1" fill="#3040b0"/><rect x="6" y="4" width="3" height="1" fill="#a0a0a0"/><rect x="10" y="4" width="2" height="1" fill="#a0a0a0"/><rect x="13" y="4" width="1.5" height="1" fill="#a0a0a0"/><rect x="2" y="6" width="2" height="1" fill="#3040b0"/><rect x="6" y="6" width="3" height="1" fill="#a0a0a0"/><rect x="10" y="6" width="2" height="1" fill="#a0a0a0"/><rect x="13" y="6" width="1.5" height="1" fill="#a0a0a0"/><rect x="2" y="8" width="2" height="1" fill="#3040b0"/><rect x="6" y="8" width="3" height="1" fill="#a0a0a0"/><rect x="10" y="8" width="2" height="1" fill="#a0a0a0"/><rect x="13" y="8" width="1.5" height="1" fill="#a0a0a0"/><rect x="2" y="10" width="2" height="1" fill="#3040b0"/><rect x="6" y="10" width="3" height="1" fill="#a0a0a0"/><rect x="10" y="10" width="2" height="1" fill="#a0a0a0"/><rect x="13" y="10" width="1.5" height="1" fill="#a0a0a0"/><rect x="2" y="12" width="2" height="1" fill="#3040b0"/><rect x="6" y="12" width="3" height="1" fill="#a0a0a0"/><rect x="10" y="12" width="2" height="1" fill="#a0a0a0"/><rect x="13" y="12" width="1.5" height="1" fill="#a0a0a0"/></svg>
<div class="a" style="left:784px;top:674.9px;width:216px;height:14px;overflow:hidden"><div class="t" style="font-size:12px;transform:scaleX(0.878);transform-origin:0 0;color:#1a1a1a">Correlations of Regression Coefficients B; DV: Y (Spreadsheet1)</div></div>
<div class="a" style="left:1000px;top:672px;width:17px;height:17px;background:#F3F1E6;border-right:1px solid #8a8678"></div>
<svg class="a" style="left:1005px;top:677px;" width="5" height="8" viewBox="0 0 5 8" shape-rendering="crispEdges"><path d="M4 0V8L0 4Z" fill="#000"/></svg>
<div class="a" style="left:1017px;top:672px;width:16px;height:17px;background:#F3F1E6;border-left:1px solid #fff;border-right:1px solid #8a8678"></div>
<svg class="a" style="left:1023px;top:677px;" width="5" height="8" viewBox="0 0 5 8" shape-rendering="crispEdges"><path d="M0 0V8L4 4Z" fill="#000"/></svg>
<div class="a" style="left:0px;top:696px;width:24px;height:29px;background:#F3F1E6;border-top:1px solid #fff;border-left:1px solid #fff;border-right:2px solid #8a8678;border-bottom:2px solid #8a8678"></div>
<svg class="a" style="left:5px;top:699px;" width="16" height="16" viewBox="0 0 16 16"><rect x="0.5" y="0.5" width="15" height="15" fill="#ece8e0" stroke="#202020"/><path d="M1 4.5h14M1 8.5h14M1 12.5h14M4.5 1v14M8.5 1v14M11.5 1v14" stroke="#c8c4bc" stroke-width="0.6"/><path d="M3.5 12.5C5 12 6 6 7.5 5.5C9 5 9 13 10.5 12.5C12 12 12 8.5 13 9C14 9.5 13.5 12 14 12.5" fill="none" stroke="#1a1a1a" stroke-width="1.2"/></svg>
<div class="a" style="left:28px;top:696.5px;width:162px;height:28.5px;background:#F3F1E6;border-top:1px solid #fff;border-left:1px solid #fff;border-right:2px solid #8a8678;border-bottom:2px solid #8a8678"></div>
<svg class="a" style="left:32px;top:701px;" width="17" height="17" viewBox="0 0 17 17"><rect x="2" y="0" width="15" height="15" fill="#fbfbfb"/><path d="M4 12L7 9M6 6L9 8M10 5L13 3M9 12L12 10" stroke="#c0c0c8" stroke-width="0.8" stroke-dasharray="1 1"/><path d="M1.5 0V15.5H17" fill="none" stroke="#2020e0" stroke-width="1.1"/><path d="M4 14L16 2" stroke="#f03030" stroke-width="1.1"/></svg>
<div class="a t" style="left:50.5px;top:705px;font-size:12px;font-weight:bold;color:#101010">Multiple Regression ...</div>
<div class="a" style="left:0px;top:725px;width:1034px;height:1px;background:#b4b0a0"></div>
<div class="a" style="left:0px;top:726px;width:1034px;height:1px;background:#fcfcf8"></div>
<div class="a t" style="left:3px;top:732px;font-size:11px;color:#202020">Ready</div>
<div class="a" style="left:628.7px;top:728.8px;width:59.0px;height:15px;border-top:1px solid #aca899;border-left:1px solid #aca899;border-right:1px solid #fff;border-bottom:1px solid #fff"></div>
<div class="a" style="left:691.5px;top:728.8px;width:110.20000000000005px;height:15px;border-top:1px solid #aca899;border-left:1px solid #aca899;border-right:1px solid #fff;border-bottom:1px solid #fff"></div>
<div class="a" style="left:804.5px;top:728.8px;width:46.5px;height:15px;border-top:1px solid #aca899;border-left:1px solid #aca899;border-right:1px solid #fff;border-bottom:1px solid #fff"></div>
<div class="a" style="left:854.3px;top:728.8px;width:66.70000000000005px;height:15px;border-top:1px solid #aca899;border-left:1px solid #aca899;border-right:1px solid #fff;border-bottom:1px solid #fff"></div>
<div class="a" style="left:924.5px;top:728.8px;width:36.200000000000045px;height:15px;border-top:1px solid #aca899;border-left:1px solid #aca899;border-right:1px solid #fff;border-bottom:1px solid #fff"></div>
<div class="a" style="left:964px;top:728.8px;width:35px;height:15px;border-top:1px solid #aca899;border-left:1px solid #aca899;border-right:1px solid #fff;border-bottom:1px solid #fff"></div>
<div class="a" style="left:1002px;top:728.8px;width:38px;height:15px;border-top:1px solid #aca899;border-left:1px solid #aca899;border-right:1px solid #fff;border-bottom:1px solid #fff"></div>
<div class="a t" style="left:628.7px;top:731px;width:59px;text-align:center;font-size:11px;letter-spacing:-0.6px;color:#202020">C1,V1</div>
<div class="a t" style="left:700px;top:731px;font-size:11px;letter-spacing:-0.2px;color:#202020">0,257696364563571</div>
<div class="a t" style="left:930px;top:731.5px;font-size:11px;color:#aca899;letter-spacing:-0.6px">CAPS</div>
<div class="a t" style="left:969.5px;top:731.5px;font-size:11px;color:#202020;letter-spacing:-0.1px">NUM</div>
<div class="a t" style="left:1007.7px;top:731.5px;font-size:11px;color:#aca899;letter-spacing:-0.5px">REC</div>
<div class="a" style="left:0px;top:745px;width:1034px;height:4px;background:#7a7a7a;border-top:1px solid #404040"></div>
<div class="a" style="left:14px;top:745px;width:26px;height:6px;background:radial-gradient(circle at 50% 80%,#a0d8f0,#3080c0);border-radius:13px 13px 0 0"></div>
<div class="a" style="left:222px;top:746px;width:2px;height:3px;background:#404040"></div>
<div class="a" style="left:350px;top:746px;width:2px;height:3px;background:#404040"></div>
<div class="a" style="left:485px;top:746px;width:2px;height:3px;background:#404040"></div>
<div class="a" style="left:745px;top:746px;width:2px;height:3px;background:#404040"></div>
<div class="a" style="left:875px;top:746px;width:2px;height:3px;background:#404040"></div>
<div class="a" style="left:747px;top:746px;width:128px;height:3px;background:#4a4a4a"></div>
</body></html>
